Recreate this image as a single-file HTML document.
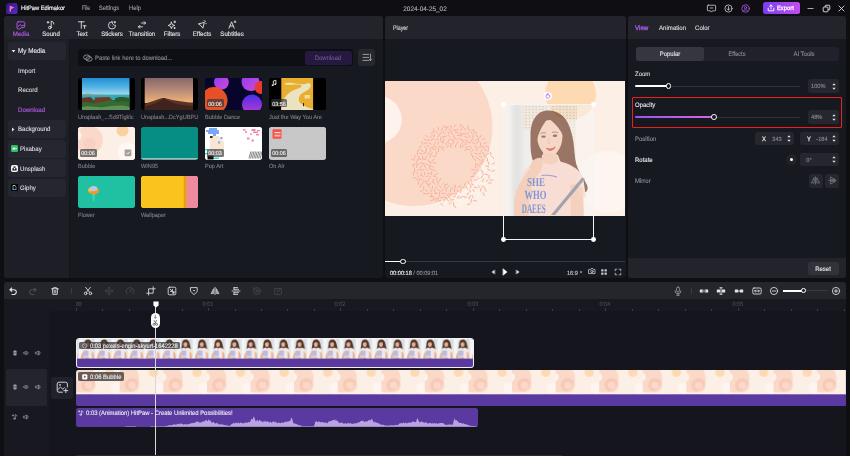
<!DOCTYPE html><html><head><meta charset="utf-8"><title>HitPaw Edimakor</title><style>
html,body{margin:0;padding:0;background:#0e0e13;}
body{width:850px;height:456px;position:relative;overflow:hidden;font-family:"Liberation Sans",sans-serif;color:#e6e6ea;font-size:6px;text-rendering:geometricPrecision;}
#w{position:absolute;left:0;top:0;width:850px;height:456px;overflow:hidden;will-change:transform}
.a{position:absolute;box-sizing:border-box}
.t{white-space:nowrap;overflow:visible;-webkit-text-stroke:.12px currentColor}
svg{overflow:visible}
text{font-family:"Liberation Sans",sans-serif;white-space:pre}
g text{font-family:inherit}
</style></head><body><div id="w">
<svg class="a" style="left:5.5px;top:2.5px;" width="11.5" height="11" viewBox="0 0 11.5 11"><defs><linearGradient id="lg1" x1="0" y1="0" x2="1" y2="1"><stop offset="0" stop-color="#2a1670"/><stop offset="1" stop-color="#5b2bd6"/></linearGradient>
<linearGradient id="lg2" x1="0" y1="0" x2="1" y2="1"><stop offset="0" stop-color="#ff5bd0"/><stop offset="1" stop-color="#ffb13b"/></linearGradient></defs>
<rect x="0" y="0" width="11.5" height="11" rx="2" fill="url(#lg1)"/>
<path d="M3.6 2.6 L8.2 4.6 L5 6.2 L5 8.6 L3.6 8.6 Z" fill="url(#lg2)"/></svg>
<svg class="a" style="left:21px;top:10.20px" width="1" height="1"><text x="0" y="0" transform="scale(0.935,1)" font-size="6.15" fill="#e8e8ee" stroke="#e8e8ee" stroke-width="0.2" text-anchor="start" >HitPaw Edimakor</text></svg>
<svg class="a" style="left:81.8px;top:10.20px" width="1" height="1"><text x="0" y="0" transform="scale(0.935,1)" font-size="6.42" fill="#9d9da6" stroke="#9d9da6" stroke-width="0.12" text-anchor="start"  textLength="8.56" lengthAdjust="spacingAndGlyphs">File</text></svg>
<svg class="a" style="left:98.7px;top:10.20px" width="1" height="1"><text x="0" y="0" transform="scale(0.935,1)" font-size="6.42" fill="#9d9da6" stroke="#9d9da6" stroke-width="0.12" text-anchor="start"  textLength="21.39" lengthAdjust="spacingAndGlyphs">Settings</text></svg>
<svg class="a" style="left:129px;top:10.20px" width="1" height="1"><text x="0" y="0" transform="scale(0.935,1)" font-size="6.42" fill="#9d9da6" stroke="#9d9da6" stroke-width="0.12" text-anchor="start"  textLength="12.83" lengthAdjust="spacingAndGlyphs">Help</text></svg>
<svg class="a" style="left:425.3px;top:10.57px" width="1" height="1"><text x="0" y="0" transform="scale(0.935,1)" font-size="6.63" fill="#b4b4bc" stroke="#b4b4bc" stroke-width="0.12" text-anchor="middle"  textLength="46.52" lengthAdjust="spacingAndGlyphs">2024-04-25_02</text></svg>
<svg class="a" style="left:707px;top:3.5px;" width="9" height="9" viewBox="0 0 9 9"><path d="M1.2 1.2 h6.6 a0.8 0.8 0 0 1 .8 .8 v4 a.8 .8 0 0 1 -.8 .8 h-2.3 l-1 1.3 l-1 -1.3 h-2.3 a.8 .8 0 0 1 -.8 -.8 v-4 a.8 .8 0 0 1 .8 -.8z M3.2 4 h2.6" fill="none" stroke="#d0d0d6" stroke-width="0.8" stroke-linecap="round" stroke-linejoin="round"/></svg>
<svg class="a" style="left:724px;top:3.5px;" width="9" height="9" viewBox="0 0 9 9"><circle cx="4.5" cy="4.5" r="3.6" fill="none" stroke="#d0d0d6" stroke-width="0.8" stroke-linecap="round" stroke-linejoin="round"/><path d="M4.5 2.6 v3.4 M3.2 4.8 l1.3 1.3 l1.3 -1.3" fill="none" stroke="#d0d0d6" stroke-width="0.8" stroke-linecap="round" stroke-linejoin="round"/></svg>
<svg class="a" style="left:740.5px;top:3.5px;" width="9" height="9" viewBox="0 0 9 9"><circle cx="4.5" cy="4.5" r="3.7" fill="none" stroke="#b45cf0" stroke-width="0.8" stroke-linecap="round" stroke-linejoin="round"/><circle cx="4.5" cy="3.7" r="1.15" fill="none" stroke="#b45cf0" stroke-width="0.8" stroke-linecap="round" stroke-linejoin="round"/><path d="M2.3 7.2 c.5 -2 3.9 -2 4.4 0" fill="none" stroke="#b45cf0" stroke-width="0.8" stroke-linecap="round" stroke-linejoin="round"/></svg>
<div class="a " style="left:763px;top:2px;width:36.5px;height:12.2px;border-radius:2.5px;background:linear-gradient(90deg,#7a3cf2,#c24df0);"></div>
<svg class="a" style="left:767.3px;top:4.2px;" width="8" height="8" viewBox="0 0 8 8"><path d="M1.2 4.2 v2.6 h5.6 v-2.6 M4 5 v-4 M2.6 2.3 l1.4 -1.4 l1.4 1.4" fill="none" stroke="#fff" stroke-width="0.9" stroke-linecap="round" stroke-linejoin="round"/></svg>
<svg class="a" style="left:777px;top:10.42px" width="1" height="1"><text x="0" y="0" transform="scale(0.935,1)" font-size="6.21" fill="#ffffff" stroke="#ffffff" stroke-width="0.25" text-anchor="start" >Export</text></svg>
<svg class="a" style="left:806px;top:3.5px;" width="9" height="9" viewBox="0 0 9 9"><path d="M1.5 4.5 h6" stroke="#cfcfd5" stroke-width="0.8" fill="none"/></svg>
<svg class="a" style="left:821.5px;top:3.5px;" width="9" height="9" viewBox="0 0 9 9"><rect x="1.2" y="3" width="4.8" height="4.8" rx="0.8" fill="none" stroke="#e0e0e6" stroke-width="0.9"/><path d="M3.2 3 v-1 a.8 .8 0 0 1 .8 -.8 h3 a.8 .8 0 0 1 .8 .8 v3 a.8 .8 0 0 1 -.8 .8 h-1" fill="none" stroke="#e0e0e6" stroke-width="0.9"/></svg>
<svg class="a" style="left:837px;top:3.5px;" width="9" height="9" viewBox="0 0 9 9"><path d="M2 2 l5 5 M7 2 l-5 5" stroke="#e0e0e6" stroke-width="0.9" fill="none" stroke-linecap="round"/></svg>
<div class="a " style="left:4px;top:16px;width:379px;height:262px;background:#171920;border-radius:3px;"></div>
<div class="a " style="left:4px;top:16px;width:379px;height:23px;background:#23242b;border-radius:3px 3px 0 0;"></div>
<div class="a " style="left:4px;top:39px;width:65.5px;height:239px;background:#1d1e26;border-radius:0 0 0 3px;border-right:.8px solid #15161b;"></div>
<svg class="a" style="left:21px;top:36.34px" width="1" height="1"><text x="0" y="0" transform="scale(0.935,1)" font-size="6.53" fill="#b65cf2" stroke="#b65cf2" stroke-width="0.12" text-anchor="middle" >Media</text></svg>
<svg class="a" style="left:51px;top:36.34px" width="1" height="1"><text x="0" y="0" transform="scale(0.935,1)" font-size="6.53" fill="#e2e2e8" stroke="#e2e2e8" stroke-width="0.12" text-anchor="middle" >Sound</text></svg>
<svg class="a" style="left:81.5px;top:36.34px" width="1" height="1"><text x="0" y="0" transform="scale(0.935,1)" font-size="6.53" fill="#e2e2e8" stroke="#e2e2e8" stroke-width="0.12" text-anchor="middle" >Text</text></svg>
<svg class="a" style="left:111.5px;top:36.34px" width="1" height="1"><text x="0" y="0" transform="scale(0.935,1)" font-size="6.53" fill="#e2e2e8" stroke="#e2e2e8" stroke-width="0.12" text-anchor="middle" >Stickers</text></svg>
<svg class="a" style="left:141.7px;top:36.34px" width="1" height="1"><text x="0" y="0" transform="scale(0.935,1)" font-size="6.53" fill="#e2e2e8" stroke="#e2e2e8" stroke-width="0.12" text-anchor="middle" >Transition</text></svg>
<svg class="a" style="left:172px;top:36.34px" width="1" height="1"><text x="0" y="0" transform="scale(0.935,1)" font-size="6.53" fill="#e2e2e8" stroke="#e2e2e8" stroke-width="0.12" text-anchor="middle" >Filters</text></svg>
<svg class="a" style="left:202px;top:36.34px" width="1" height="1"><text x="0" y="0" transform="scale(0.935,1)" font-size="6.53" fill="#e2e2e8" stroke="#e2e2e8" stroke-width="0.12" text-anchor="middle" >Effects</text></svg>
<svg class="a" style="left:232px;top:36.34px" width="1" height="1"><text x="0" y="0" transform="scale(0.935,1)" font-size="6.53" fill="#e2e2e8" stroke="#e2e2e8" stroke-width="0.12" text-anchor="middle" >Subtitles</text></svg>
<svg class="a" style="left:16px;top:19.5px;" width="10" height="10" viewBox="0 0 10 10"><path d="M2.2 1.8 h5 a1.6 1.6 0 0 1 1.6 1.6 v2.6 a1.6 1.6 0 0 1 -1.6 1.6 h-2 l-1.2 1.4 h-1.6 a1.4 1.4 0 0 1 -1.4 -1.4 v-4.2 a1.6 1.6 0 0 1 1.2 -1.6z" fill="none" stroke="#b65cf2" stroke-width="0.9" stroke-linecap="round" stroke-linejoin="round"/><path d="M2 6.6 l2.2 -2 l1.8 1.6 l1.2 -1 l1.4 1.2" fill="none" stroke="#b65cf2" stroke-width="0.9" stroke-linecap="round" stroke-linejoin="round"/></svg>
<svg class="a" style="left:46px;top:19.5px;" width="10" height="10" viewBox="0 0 10 10"><path d="M5.2 7.4 v-6.2 c1.6 .2 2.6 1.2 2.6 2.8" fill="none" stroke="#e2e2e8" stroke-width="0.9" stroke-linecap="round" stroke-linejoin="round"/><ellipse cx="3.9" cy="7.6" rx="1.4" ry="1.2" fill="none" stroke="#e2e2e8" stroke-width="0.9" stroke-linecap="round" stroke-linejoin="round"/><path d="M2 1.4 v1.8 M1.1 2.3 h1.8" fill="none" stroke="#e2e2e8" stroke-width="0.9" stroke-linecap="round" stroke-linejoin="round"/></svg>
<svg class="a" style="left:76.5px;top:19.5px;" width="10" height="10" viewBox="0 0 10 10"><path d="M1.400 1.800 h5.800 M4.300 1.800 v6.600 M6.200 5.800 h2.800 M7.600 5.800 v2.600" fill="none" stroke="#e2e2e8" stroke-width="0.9" stroke-linecap="round" stroke-linejoin="round"/></svg>
<svg class="a" style="left:106.5px;top:19.5px;" width="10" height="10" viewBox="0 0 10 10"><path d="M5 1.8 a3.6 3.6 0 1 0 3.6 3.6 c-1.6 .2 -3.6 -1.2 -3.6 -3.6z" fill="none" stroke="#e2e2e8" stroke-width="0.9" stroke-linecap="round" stroke-linejoin="round"/><circle cx="3.8" cy="5" r=".45" fill="#e2e2e8"/><circle cx="5.6" cy="6.6" r=".45" fill="#e2e2e8"/><path d="M7.8 1.4 v1.6 M7 2.2 h1.6" fill="none" stroke="#e2e2e8" stroke-width="0.9" stroke-linecap="round" stroke-linejoin="round"/></svg>
<svg class="a" style="left:136.7px;top:19.5px;" width="10" height="10" viewBox="0 0 10 10"><path d="M4.6 3 h4 M7.2 1.6 l1.4 1.4 l-1.4 1.4" fill="none" stroke="#e2e2e8" stroke-width="0.9" stroke-linecap="round" stroke-linejoin="round"/><path d="M5.4 6.8 h-4 M2.8 5.4 l-1.4 1.4 l1.4 1.4" fill="none" stroke="#e2e2e8" stroke-width="0.9" stroke-linecap="round" stroke-linejoin="round"/></svg>
<svg class="a" style="left:167px;top:19.5px;" width="10" height="10" viewBox="0 0 10 10"><path d="M4.4 2.2 l.9 2.3 l2.3 .9 l-2.3 .9 l-.9 2.3 l-.9 -2.3 l-2.3 -.9 l2.3 -.9z" fill="none" stroke="#e2e2e8" stroke-width="0.9" stroke-linecap="round" stroke-linejoin="round"/><path d="M7.8 1 v1.8 M6.9 1.9 h1.8" fill="none" stroke="#e2e2e8" stroke-width="0.9" stroke-linecap="round" stroke-linejoin="round"/><path d="M7.6 7.4 v1.2 M7 8 h1.2" fill="none" stroke="#e2e2e8" stroke-width="0.9" stroke-linecap="round" stroke-linejoin="round"/></svg>
<svg class="a" style="left:197px;top:19.5px;" width="10" height="10" viewBox="0 0 10 10"><path d="M1.8 3.8 l5.6 -1.4 l-1.6 5.8 l-1.6 -2.2z" fill="none" stroke="#e2e2e8" stroke-width="0.9" stroke-linecap="round" stroke-linejoin="round"/><path d="M8.4 1.2 l.3 .3 M8.8 3.6 h.4 M7.2 .6 v.4" fill="none" stroke="#e2e2e8" stroke-width="0.9" stroke-linecap="round" stroke-linejoin="round"/></svg>
<svg class="a" style="left:227px;top:19.5px;" width="10" height="10" viewBox="0 0 10 10"><path d="M2 8.2 l2.6 -6.4 l2.6 6.4 M3 6 h3.2" fill="none" stroke="#e2e2e8" stroke-width="0.9" stroke-linecap="round" stroke-linejoin="round"/><path d="M8 1 v1.6 M7.2 1.8 h1.6" fill="none" stroke="#e2e2e8" stroke-width="0.9" stroke-linecap="round" stroke-linejoin="round"/></svg>
<div class="a " style="left:8px;top:42px;width:58.2px;height:18px;background:#25262f;border-radius:3px;"></div>
<svg class="a" style="left:10.5px;top:49px;" width="5" height="4" viewBox="0 0 5 4"><path d="M0.6 1 h3.8 l-1.9 2.4z" fill="#e6e6ea"/></svg>
<svg class="a" style="left:18px;top:53.41px" width="1" height="1"><text x="0" y="0" transform="scale(0.935,1)" font-size="6.74" fill="#e6e6ea" stroke="#e6e6ea" stroke-width="0.12" text-anchor="start" >My Media</text></svg>
<svg class="a" style="left:18px;top:72.84px" width="1" height="1"><text x="0" y="0" transform="scale(0.935,1)" font-size="6.53" fill="#d4d4da" stroke="#d4d4da" stroke-width="0.12" text-anchor="start" >Import</text></svg>
<svg class="a" style="left:18px;top:92.14px" width="1" height="1"><text x="0" y="0" transform="scale(0.935,1)" font-size="6.53" fill="#d4d4da" stroke="#d4d4da" stroke-width="0.12" text-anchor="start" >Record</text></svg>
<svg class="a" style="left:18px;top:111.94px" width="1" height="1"><text x="0" y="0" transform="scale(0.935,1)" font-size="6.53" fill="#b65cf2" stroke="#b65cf2" stroke-width="0.12" text-anchor="start" >Download</text></svg>
<div class="a " style="left:8px;top:120px;width:58.2px;height:18px;background:#25262f;border-radius:3px;"></div>
<svg class="a" style="left:10.8px;top:126.5px;" width="4" height="5" viewBox="0 0 4 5"><path d="M1 0.6 v3.8 l2.4 -1.9z" fill="#e6e6ea"/></svg>
<svg class="a" style="left:18px;top:131.34px" width="1" height="1"><text x="0" y="0" transform="scale(0.935,1)" font-size="6.53" fill="#dedee4" stroke="#dedee4" stroke-width="0.12" text-anchor="start" >Background</text></svg>
<div class="a " style="left:8px;top:139.7px;width:58.2px;height:18px;background:#25262f;border-radius:3px;"></div>
<svg class="a" style="left:11px;top:145.3px;" width="7" height="7" viewBox="0 0 7 7"><rect x="0" y="0" width="7" height="7" rx="1.3" fill="#2fbf62"/><path d="M1.6 2.4 h2.6 v2.4 h-2.6z M4.2 3.4 l1.4 -.8 v2 l-1.4 -.8" fill="#d8ffe4"/></svg>
<svg class="a" style="left:20px;top:151.04px" width="1" height="1"><text x="0" y="0" transform="scale(0.935,1)" font-size="6.53" fill="#dedee4" stroke="#dedee4" stroke-width="0.12" text-anchor="start" >Pixabay</text></svg>
<div class="a " style="left:8px;top:159.3px;width:58.2px;height:18px;background:#25262f;border-radius:3px;"></div>
<svg class="a" style="left:11px;top:164.9px;" width="7" height="7" viewBox="0 0 7 7"><rect x="0" y="0" width="7" height="7" rx="1.8" fill="#f2f2f4"/><path d="M2.4 1.4 h2.2 v1.4 h-2.2z M1.4 3.3 h1.6 v1.3 h1 v-1.3 h1.6 v2.3 h-4.2z" fill="#18181c"/></svg>
<svg class="a" style="left:20px;top:170.64px" width="1" height="1"><text x="0" y="0" transform="scale(0.935,1)" font-size="6.53" fill="#dedee4" stroke="#dedee4" stroke-width="0.12" text-anchor="start" >Unsplash</text></svg>
<div class="a " style="left:8px;top:178.8px;width:58.2px;height:18px;background:#25262f;border-radius:3px;"></div>
<svg class="a" style="left:11px;top:184.4px;" width="7" height="7" viewBox="0 0 7 7"><rect x="0" y="0" width="7" height="7" rx="1" fill="#050507"/><path d="M2 1.5 h2.2" stroke="#ffe14d" stroke-width=".9"/><path d="M2 1.5 v4" stroke="#20e58a" stroke-width=".9"/><path d="M1.6 5.5 h3.8" stroke="#4aa8ff" stroke-width=".9"/><path d="M5 5.5 v-2.4" stroke="#a45cff" stroke-width=".9"/><path d="M4.2 1.5 l.8 1.6" stroke="#ff5c7a" stroke-width=".9"/></svg>
<svg class="a" style="left:20px;top:190.14px" width="1" height="1"><text x="0" y="0" transform="scale(0.935,1)" font-size="6.53" fill="#dedee4" stroke="#dedee4" stroke-width="0.12" text-anchor="start" >Giphy</text></svg>
<div class="a " style="left:78px;top:49px;width:274.5px;height:17px;background:#0e0f14;border-radius:3px;"></div>
<svg class="a" style="left:83.4px;top:53.6px;" width="10" height="8" viewBox="0 0 10 8"><ellipse cx="3.8" cy="3.2" rx="3.2" ry="2.3" fill="none" stroke="#9a9aa4" stroke-width=".85"/><ellipse cx="6" cy="4.9" rx="3.2" ry="2.3" fill="none" stroke="#9a9aa4" stroke-width=".85"/></svg>
<svg class="a" style="left:94.5px;top:59.86px" width="1" height="1"><text x="0" y="0" transform="scale(0.935,1)" font-size="6.31" fill="#8a8a94" stroke="#8a8a94" stroke-width="0.12" text-anchor="start" >Paste link here to download...</text></svg>
<div class="a " style="left:305px;top:50.5px;width:46.5px;height:14px;background:#26193f;border-radius:2.5px;"></div>
<svg class="a" style="left:328.2px;top:59.80px" width="1" height="1"><text x="0" y="0" transform="scale(0.935,1)" font-size="6.42" fill="#6b5a90" stroke="#6b5a90" stroke-width="0.12" text-anchor="middle" >Download</text></svg>
<div class="a " style="left:357.5px;top:49px;width:17.5px;height:17px;background:#26272f;border-radius:3px;"></div>
<svg class="a" style="left:361.5px;top:53px;" width="10" height="9" viewBox="0 0 10 9"><path d="M1 1.4 h5.6 M1 4.4 h5.6 M1 7.4 h5.6 M8.4 1 v6.6 M7.4 6.4 l1 1.2 l1 -1.2" fill="none" stroke="#b8b8c0" stroke-width=".8" stroke-linecap="round" stroke-linejoin="round"/></svg>
<svg class="a" style="left:77.8px;top:77.5px;border-radius:3px;overflow:hidden;background:#000" width="57" height="32.5" viewBox="0 0 57 32.5"><defs><linearGradient id="sky1" x1="0" y1="0" x2="0" y2="1"><stop offset="0" stop-color="#1f8fd4"/><stop offset=".55" stop-color="#56b4e4"/><stop offset="1" stop-color="#a6daf0"/></linearGradient></defs>
<rect x="4" y="0" width="47.5" height="17" fill="url(#sky1)"/>
<rect x="4" y="16.6" width="47.5" height="7" fill="#35a8b0"/>
<path d="M4 16.2 l6 -.6 l6 .8 l8 .2 v.6 h-20z" fill="#8aa090"/>
<rect x="4" y="22" width="47.5" height="10.5" fill="#2c5a2a"/>
<path d="M4 20 l8 -1 l3 2 l-2 3.4 h-9z" fill="#6a3324"/><path d="M17 19.4 l14 -.4 l3 2.4 l-3 3.6 h-15z" fill="#74382a"/>
<path d="M4 24.5 c6 -2 10 2 16 .5 s12 -4 18 -2 s8 -3 13.500 -1 v10.500 h-47.500z" fill="#356a30"/>
<path d="M4 29 c8 -2 14 1 22 0 s16 -3 25.500 0 v3.500 h-47.500z" fill="#5f8f5a"/>
<path d="M37 20.500 c3 -2 8 -2 14.500 -.5 v4 c-5 -1 -10 -1 -14.500 0z" fill="#285a2c"/></svg>
<svg class="a" style="left:77.8px;top:118.54px" width="1" height="1"><text x="0" y="0" transform="scale(0.935,1)" font-size="5.99" fill="#7c7c86" stroke="#7c7c86" stroke-width="0.12" text-anchor="start" >Unsplash_...Sd9Tigklc</text></svg>
<svg class="a" style="left:141.2px;top:77.5px;border-radius:3px;overflow:hidden;background:#000" width="57" height="32.5" viewBox="0 0 57 32.5"><defs><linearGradient id="sky2" x1="0" y1="0" x2="0" y2="1"><stop offset="0" stop-color="#86676a"/><stop offset=".5" stop-color="#b98b78"/><stop offset="1" stop-color="#f0b577"/></linearGradient></defs>
<rect x="3.700" y="0" width="48.300" height="25" fill="url(#sky2)"/>
<path d="M3.700 25.400 c5 -1 11 -3.600 16 -5 c2 -.6 3.600 -.6 5.600 0 c8 2.200 16 3.400 26.700 4.200 v7.900 h-48.300z" fill="#5a3226"/>
<path d="M22.500 20 c-3 3.500 -9 6.500 -18.800 8.500 v4 h48.300 v-4.500 c-10 -.5 -22 -2.500 -29.500 -8z" fill="#40231d"/></svg>
<svg class="a" style="left:141.2px;top:118.54px" width="1" height="1"><text x="0" y="0" transform="scale(0.935,1)" font-size="5.99" fill="#7c7c86" stroke="#7c7c86" stroke-width="0.12" text-anchor="start" >Unsplash...DcYgUBPU</text></svg>
<svg class="a" style="left:204.8px;top:77.5px;border-radius:3px;overflow:hidden;background:#07052c" width="57" height="32.5" viewBox="0 0 57 32.5"><defs>
<linearGradient id="b1" x1="0" y1="0" x2="1" y2="1"><stop offset="0" stop-color="#f24a24"/><stop offset="1" stop-color="#d9582c"/></linearGradient>
<linearGradient id="b2" x1="0" y1="0" x2="1" y2="1"><stop offset="0" stop-color="#8a3cf4"/><stop offset="1" stop-color="#d04ad8"/></linearGradient>
<linearGradient id="b3" x1="0" y1="0" x2="0" y2="1"><stop offset="0" stop-color="#4a2ee8"/><stop offset="1" stop-color="#c03cd0"/></linearGradient>
</defs>
<rect width="57" height="32.500" fill="#07052c"/>
<circle cx="16.400" cy="4.200" r="7.400" fill="url(#b2)"/>
<circle cx="9" cy="22.500" r="13.500" fill="url(#b1)"/>
<circle cx="45.500" cy="4" r="9" fill="url(#b2)"/>
<circle cx="56" cy="9.500" r="6.500" fill="#e83a2e"/>
<circle cx="47" cy="26.500" r="10" fill="url(#b3)"/></svg>
<div class="a " style="left:207.0px;top:99.4px;width:16.5px;height:8px;background:rgba(50,50,54,.66);border-radius:1.5px;"></div>
<svg class="a" style="left:215.3px;top:105.51px" width="1" height="1"><text x="0" y="0" transform="scale(0.935,1)" font-size="5.89" fill="#f0f0f2" stroke="#f0f0f2" stroke-width="0.12" text-anchor="middle" >00:06</text></svg>
<svg class="a" style="left:204.8px;top:118.54px" width="1" height="1"><text x="0" y="0" transform="scale(0.935,1)" font-size="5.99" fill="#7c7c86" stroke="#7c7c86" stroke-width="0.12" text-anchor="start" >Bubble Dance</text></svg>
<svg class="a" style="left:268.6px;top:77.5px;border-radius:3px;overflow:hidden;background:#000" width="57" height="32.5" viewBox="0 0 57 32.5"><rect width="57" height="32.500" fill="#000"/>
<rect x="12.300" y="0" width="31.800" height="32.500" fill="#e8ae2e"/>
<path d="M15 6 c6 -4 16 3 24 -1 c4 0 4 5 -2 8 c-6 3 -8 6 -7 10 c1 3 8 7 14.100 8 v1.500 h-31.800 v-6 c2 -6 6 -12 14 -15 c8 -2 8 -5 2 -5 c-6 0 -10 1 -13.300 -.5z" fill="#ebe3bf"/>
<rect x="35.500" y="17" width="5.500" height="3.500" fill="#f2e6b8" opacity=".8"/>
<rect x="34" y="25" width="1" height="3.200" fill="#222"/>
<path d="M4.300 7.200 v-4.200 l2.600 -.8 v3.800" fill="none" stroke="#fff" stroke-width=".8"/><ellipse cx="3.600" cy="7.200" rx="1" ry=".8" fill="#fff"/><ellipse cx="6.200" cy="6.200" rx="1" ry=".8" fill="#fff"/></svg>
<div class="a " style="left:270.8px;top:99.4px;width:16.5px;height:8px;background:rgba(50,50,54,.66);border-radius:1.5px;"></div>
<svg class="a" style="left:279.1px;top:105.51px" width="1" height="1"><text x="0" y="0" transform="scale(0.935,1)" font-size="5.89" fill="#f0f0f2" stroke="#f0f0f2" stroke-width="0.12" text-anchor="middle" >03:56</text></svg>
<svg class="a" style="left:268.6px;top:118.54px" width="1" height="1"><text x="0" y="0" transform="scale(0.935,1)" font-size="5.99" fill="#7c7c86" stroke="#7c7c86" stroke-width="0.12" text-anchor="start" >Just the Way You Are</text></svg>
<svg class="a" style="left:77.8px;top:127px;border-radius:3px;overflow:hidden;background:#fcefe6" width="57" height="32.5" viewBox="0 0 57 32.5"><rect width="57" height="32.500" fill="#fcefe6"/>
<circle cx="11" cy="13" r="14" fill="#fad9cb"/>
<circle cx="11.500" cy="17" r="6.500" fill="#f8cdbd" opacity=".7"/>
<circle cx="-1" cy="8.500" r="4.500" fill="#fff3ee"/>
<circle cx="44.500" cy="3.500" r="6" fill="#fbd0a0"/>
<circle cx="49" cy="25" r="9.500" fill="#fff7f3"/><rect x="46.600" y="22.400" width="6.800" height="6.800" rx="1.200" fill="#a59d98"/><path d="M48.300 25.800 l1.300 1.300 l2.400 -2.600" fill="none" stroke="#fff" stroke-width=".9"/></svg>
<div class="a " style="left:80.0px;top:148.9px;width:16.5px;height:8px;background:rgba(50,50,54,.66);border-radius:1.5px;"></div>
<svg class="a" style="left:88.3px;top:155.01px" width="1" height="1"><text x="0" y="0" transform="scale(0.935,1)" font-size="5.89" fill="#f0f0f2" stroke="#f0f0f2" stroke-width="0.12" text-anchor="middle" >00:06</text></svg>
<svg class="a" style="left:77.8px;top:168.04px" width="1" height="1"><text x="0" y="0" transform="scale(0.935,1)" font-size="5.99" fill="#7c7c86" stroke="#7c7c86" stroke-width="0.12" text-anchor="start" >Bubble</text></svg>
<svg class="a" style="left:141.2px;top:127px;border-radius:3px;overflow:hidden;background:#068d84" width="57" height="32.5" viewBox="0 0 57 32.5"><rect width="57" height="32.500" fill="#068d84"/><rect y="31.200" width="57" height="1.300" fill="#c6c9c8"/></svg>
<svg class="a" style="left:141.2px;top:168.04px" width="1" height="1"><text x="0" y="0" transform="scale(0.935,1)" font-size="5.99" fill="#7c7c86" stroke="#7c7c86" stroke-width="0.12" text-anchor="start" >WIN95</text></svg>
<svg class="a" style="left:204.8px;top:127px;border-radius:3px;overflow:hidden;background:#fff" width="57" height="32.5" viewBox="0 0 57 32.5"><rect width="57" height="32.500" fill="#ffffff"/><path d="M1 3 h3 v-2 h8 v2 h2 v4 h-3 v3 h-3 v-3 h-5 v-2 h-2z" fill="#7aa6f2"/><path d="M5 9 h9 l5 6 v8 l-3 4 h-11z" fill="#f7e6d4"/><rect x="5" y="9" width="2.600" height="2" fill="#3a2a22"/><rect x="15.500" y="10" width="2" height="2" fill="#7aa6f2"/><rect x="13" y="14.500" width="2" height="2" fill="#7aa6f2"/><rect x="0" y="22" width="3" height="1.400" fill="#28e0b0"/><rect x="0" y="26" width="4" height="1.400" fill="#28e0b0"/><rect x="8" y="30.500" width="6" height="1.400" fill="#28e0b0"/><rect x="2.500" y="28.500" width="6" height="4" fill="#0a0a0a"/><rect x="38" y="2" width="2.5" height="1.6" fill="#f583a8"/><rect x="40" y="4.2" width="2" height="1.6" fill="#f583a8"/><rect x="46.5" y="2" width="4" height="2" fill="#f583a8"/><rect x="48" y="4.5" width="5" height="1.6" fill="#f583a8"/><rect x="51" y="7" width="3" height="1.4" fill="#f583a8"/><rect x="42" y="10.5" width="2.4" height="2" fill="#f583a8"/><rect x="46.5" y="12.5" width="2.4" height="2" fill="#f583a8"/><rect x="52" y="3" width="3" height="1.2" fill="#f583a8"/><rect x="45" y="6.5" width="2" height="1.4" fill="#f583a8"/><path d="M44.0 31.500 l1.800 -7" stroke="#333" stroke-width=".6"/><path d="M45.6 31.500 l1.800 -7" stroke="#333" stroke-width=".6"/><path d="M47.2 31.500 l1.800 -7" stroke="#333" stroke-width=".6"/><path d="M48.8 31.500 l1.800 -7" stroke="#333" stroke-width=".6"/><path d="M50.4 31.500 l1.800 -7" stroke="#333" stroke-width=".6"/><path d="M52.0 31.500 l1.800 -7" stroke="#333" stroke-width=".6"/><path d="M53.6 31.500 l1.800 -7" stroke="#333" stroke-width=".6"/><path d="M55.2 31.500 l1.800 -7" stroke="#333" stroke-width=".6"/></svg>
<div class="a " style="left:207.0px;top:148.9px;width:16.5px;height:8px;background:rgba(50,50,54,.66);border-radius:1.5px;"></div>
<svg class="a" style="left:215.3px;top:155.01px" width="1" height="1"><text x="0" y="0" transform="scale(0.935,1)" font-size="5.89" fill="#f0f0f2" stroke="#f0f0f2" stroke-width="0.12" text-anchor="middle" >00:03</text></svg>
<svg class="a" style="left:204.8px;top:168.04px" width="1" height="1"><text x="0" y="0" transform="scale(0.935,1)" font-size="5.99" fill="#7c7c86" stroke="#7c7c86" stroke-width="0.12" text-anchor="start" >Pop Art</text></svg>
<svg class="a" style="left:268.6px;top:127px;border-radius:3px;overflow:hidden;background:#bfbfbf" width="57" height="32.5" viewBox="0 0 57 32.5"><defs><pattern id="chk" width="2" height="2" patternUnits="userSpaceOnUse"><rect width="2" height="2" fill="#c4c4c4"/><rect width="1" height="1" fill="#cbcbcb"/><rect x="1" y="1" width="1" height="1" fill="#cbcbcb"/></pattern></defs>
<rect width="57" height="32.500" fill="url(#chk)"/>
<rect x="3.500" y="2.300" width="9" height="9.500" rx="1" fill="#f4524a"/><rect x="5.500" y="5" width="6" height="1.200" fill="#ffd9d4"/><rect x="5.500" y="7.600" width="6" height="2" fill="#ffb0a8"/></svg>
<div class="a " style="left:270.8px;top:148.9px;width:16.5px;height:8px;background:rgba(50,50,54,.66);border-radius:1.5px;"></div>
<svg class="a" style="left:279.1px;top:155.01px" width="1" height="1"><text x="0" y="0" transform="scale(0.935,1)" font-size="5.89" fill="#f0f0f2" stroke="#f0f0f2" stroke-width="0.12" text-anchor="middle" >00:06</text></svg>
<svg class="a" style="left:268.6px;top:168.04px" width="1" height="1"><text x="0" y="0" transform="scale(0.935,1)" font-size="5.99" fill="#7c7c86" stroke="#7c7c86" stroke-width="0.12" text-anchor="start" >On Air</text></svg>
<svg class="a" style="left:77.8px;top:175.5px;border-radius:3px;overflow:hidden;background:#20c0a3" width="57" height="32.5" viewBox="0 0 57 32.5"><rect width="57" height="32.500" fill="#20c0a3"/>
<path d="M13.800 16 l3.600 0 l-1 9.500 h-1.600z" fill="#3fd0b4"/>
<ellipse cx="15.500" cy="14.800" rx="5.600" ry="3.600" fill="#f29a1e"/><ellipse cx="12" cy="13.800" rx="1.800" ry="2" fill="#f6c53a"/>
<ellipse cx="15.600" cy="12.600" rx="3.800" ry="2.600" fill="#b9c7ee"/></svg>
<svg class="a" style="left:77.8px;top:216.54px" width="1" height="1"><text x="0" y="0" transform="scale(0.935,1)" font-size="5.99" fill="#7c7c86" stroke="#7c7c86" stroke-width="0.12" text-anchor="start" >Flower</text></svg>
<svg class="a" style="left:141.2px;top:175.5px;border-radius:3px;overflow:hidden;background:#f8c41d" width="57" height="32.5" viewBox="0 0 57 32.5"><rect width="57" height="32.500" fill="#f8c41d"/><rect x="42.800" y="0" width="2.800" height="32.500" fill="#ec9d12"/><rect x="45.600" y="0" width="11.400" height="32.500" fill="#ee8a9d"/></svg>
<svg class="a" style="left:141.2px;top:216.54px" width="1" height="1"><text x="0" y="0" transform="scale(0.935,1)" font-size="5.99" fill="#7c7c86" stroke="#7c7c86" stroke-width="0.12" text-anchor="start" >Wallpaper</text></svg>
<div class="a " style="left:385px;top:16px;width:241px;height:262px;background:#171920;border-radius:3px;"></div>
<div class="a " style="left:385px;top:16px;width:241px;height:23px;background:#23242b;border-radius:3px 3px 0 0;"></div>
<svg class="a" style="left:392.6px;top:29.87px" width="1" height="1"><text x="0" y="0" transform="scale(0.935,1)" font-size="6.63" fill="#d8d8de" stroke="#d8d8de" stroke-width="0.12" text-anchor="start"  textLength="16.04" lengthAdjust="spacingAndGlyphs">Player</text></svg>
<svg class="a" style="left:385.2px;top:80.8px;overflow:hidden" width="240.2" height="135.4" viewBox="0 0 240.2 135.4"><rect width="240.2" height="135.4" fill="#fcefe5"/><circle cx="28.8" cy="46.2" r="78.7" fill="#fbd9c9"/><circle cx="-7" cy="38.600" r="23.700" fill="#fef2ed"/><circle cx="185.600" cy="13" r="25.400" fill="#fddab2"/><circle cx="223" cy="101" r="31" fill="#fff5f0"/><defs><filter id="dbl"><feGaussianBlur stdDeviation=".3"/></filter></defs><path d="M58.7 44.3L60.6 46.5M63.6 45.9L60.7 46.0M65.7 44.4L66.5 47.2M71.2 43.9L69.0 45.9M75.8 43.1L74.8 45.8M77.0 44.4L78.5 46.9M83.2 44.7L83.1 47.6M49.0 48.1L48.8 51.0M52.9 46.4L53.7 49.2M57.8 46.4L56.7 49.1M61.8 46.5L60.7 49.2M64.2 47.7L65.5 50.3M67.7 49.0L70.6 49.2M73.3 48.8L70.5 49.1M76.6 47.2L75.7 50.0M79.4 47.2L81.0 49.6M83.3 47.7L85.0 50.0M86.6 49.0L89.5 49.3M48.6 50.6L46.2 52.3M50.9 50.3L52.8 52.6M56.9 51.5L54.5 53.1M57.9 50.2L59.7 52.5M62.8 50.3L64.2 52.9M66.3 50.5L67.1 53.3M70.1 51.4L73.0 51.4M76.9 52.7L74.0 52.8M79.8 52.5L77.0 53.2M83.2 51.8L80.7 53.2M85.8 50.9L87.5 53.2M88.5 51.2L91.4 51.8M40.7 54.1L42.7 56.2M47.2 54.5L44.9 56.3M49.2 53.4L48.9 56.3M54.9 53.9L52.6 55.7M59.1 55.2L56.6 56.7M61.4 55.0L58.8 56.2M63.1 53.9L65.1 56.1M68.7 53.8L69.0 56.7M71.8 54.3L74.6 54.8M74.5 54.4L77.3 55.0M80.0 55.7L82.8 56.4M83.6 53.9L85.2 56.3M88.4 54.3L87.6 57.1M91.2 53.6L92.7 56.1M96.3 54.4L94.5 56.6M38.9 57.7L40.9 59.7M42.1 58.8L44.9 59.5M48.6 58.1L45.9 59.2M53.4 58.1L50.7 59.0M55.5 56.9L55.8 59.8M59.1 58.1L57.7 60.6M64.4 58.1L62.9 60.6M65.9 58.4L68.6 59.4M69.6 57.3L72.2 58.5M73.8 57.6L76.5 58.4M76.6 58.7L79.1 60.2M80.2 58.9L82.9 59.9M88.2 58.4L85.7 59.8M92.2 58.1L89.9 59.8M93.4 57.8L93.3 60.7M99.5 57.1L97.4 59.1M37.0 60.5L37.8 63.3M42.2 62.0L39.3 62.3M44.0 61.9L46.5 63.3M50.4 61.4L48.9 63.9M53.9 60.8L52.6 63.4M56.4 61.1L59.2 62.0M61.5 61.5L61.4 64.4M63.6 61.8L66.0 63.4M68.8 60.2L68.0 63.0M73.2 60.5L71.5 62.9M78.3 60.6L76.5 63.0M80.7 61.4L80.0 64.2M82.5 61.6L85.4 61.8M87.0 61.2L89.5 62.7M93.0 60.9L90.8 62.8M95.4 61.6L95.6 64.5M101.4 61.4L98.9 62.8M35.9 64.7L34.4 67.2M39.3 65.2L41.4 67.2M41.7 64.3L44.1 65.9M49.1 65.7L46.3 66.6M50.0 65.0L51.6 67.4M53.6 65.6L56.4 66.3M57.4 65.0L59.2 67.3M63.5 64.5L61.9 66.9M65.7 63.8L66.3 66.7M71.1 63.6L70.3 66.4M75.7 63.9L75.3 66.8M78.6 63.9L77.1 66.4M83.1 65.8L80.4 66.6M85.1 65.0L86.2 67.7M89.9 64.8L91.6 67.2M95.7 65.0L93.3 66.6M99.1 65.8L96.2 66.2M100.9 65.1L103.6 66.1M33.8 68.3L32.4 70.9M35.6 69.1L38.2 70.3M41.6 67.9L40.8 70.7M45.3 67.7L45.7 70.6M47.5 68.0L50.4 68.6M53.8 67.9L53.4 70.8M56.6 67.6L58.5 69.7M82.3 68.0L79.7 69.3M82.3 68.1L85.1 69.0M88.6 68.3L86.7 70.5M91.3 67.0L92.0 69.8M97.6 68.5L95.5 70.5M99.7 66.9L100.6 69.7M103.7 67.6L103.0 70.4M32.8 70.7L32.3 73.5M37.2 72.4L34.4 72.6M41.2 71.3L38.6 72.6M44.4 71.4L42.5 73.6M47.2 71.5L45.7 74.0M51.1 70.9L51.4 73.8M85.7 71.8L87.2 74.3M89.6 72.1L92.2 73.2M96.2 72.1L93.4 72.8M97.8 71.4L99.1 74.0M103.8 72.5L101.2 73.7M105.7 71.3L105.8 74.2M30.0 74.6L29.6 77.5M32.7 74.8L34.4 77.1M37.1 74.8L38.0 77.5M41.8 75.3L40.0 77.5M45.3 74.0L45.0 76.9M48.0 75.2L50.9 75.2M87.0 74.1L88.0 76.9M90.2 75.6L92.5 77.4M94.1 74.9L96.6 76.3M98.9 74.8L101.6 75.9M106.9 75.3L108.6 77.6M26.7 78.4L29.5 79.2M32.5 78.5L31.7 81.3M33.4 77.8L36.1 78.6M37.5 78.0L40.4 78.5M42.6 78.9L44.9 80.6M49.4 78.2L47.0 79.8M88.9 77.9L91.1 79.9M93.7 77.9L95.6 80.1M97.9 78.1L97.0 80.8M102.3 77.4L102.4 80.3M31.4 82.5L28.7 83.7M34.6 82.1L32.6 84.2M35.9 81.9L38.7 82.5M39.9 82.8L42.7 83.7M44.1 81.4L46.9 82.1M48.1 81.7L51.0 82.2M90.3 82.8L93.1 83.5M97.3 81.2L94.8 82.7M103.4 81.2L103.9 84.0M109.6 81.8L107.2 83.4M27.6 83.8L28.9 86.3M32.0 83.6L31.5 86.5M36.7 84.4L35.4 87.0M39.1 84.0L40.4 86.6M44.0 84.1L44.7 86.9M45.3 84.6L47.9 86.0M90.7 84.0L90.6 86.9M95.4 83.9L93.4 86.0M101.0 85.0L103.8 85.9M29.6 87.7L29.3 90.6M35.1 88.3L32.5 89.6M38.6 88.6L35.9 89.6M41.0 87.8L43.1 89.8M44.6 87.7L47.3 88.9M48.1 88.5L50.6 90.0M86.7 88.6L89.6 89.0M92.8 88.2L91.3 90.6M95.8 88.7L97.9 90.8M102.7 88.1L105.2 89.5M109.4 89.5L106.7 90.3M28.0 91.3L28.8 94.1M30.6 91.2L33.0 92.8M36.2 92.0L35.8 94.9M39.2 90.9L39.6 93.7M45.4 92.3L42.6 92.7M46.8 90.8L46.6 93.7M52.3 92.4L49.8 93.9M90.9 91.6L88.4 93.1M96.8 91.2L98.6 93.5M100.1 93.1L102.9 93.8M28.0 96.5L30.8 97.1M32.3 94.8L34.2 97.0M36.6 94.1L38.8 96.1M43.7 94.9L40.9 95.7M45.6 95.6L44.1 98.1M48.1 95.0L51.0 95.5M89.0 95.1L86.1 95.7M92.1 95.8L94.1 97.8M97.8 94.7L96.0 97.1M104.2 94.4L103.9 97.3M31.4 97.6L33.3 99.8M36.6 98.4L33.7 98.6M38.0 99.5L40.7 100.5M43.7 99.1L41.4 100.9M48.3 98.2L48.1 101.1M51.9 97.1L51.5 100.0M55.5 97.3L54.6 100.1M85.7 98.5L87.0 101.0M92.0 98.8L89.1 99.1M98.6 97.9L97.6 100.6M102.9 99.0L100.7 100.9M107.9 99.0L105.0 99.2M33.5 100.9L33.4 103.8M38.1 101.2L36.8 103.8M40.9 102.2L43.5 103.5M45.4 101.1L44.4 103.8M47.9 100.7L49.4 103.2M53.0 100.4L52.6 103.3M58.8 101.7L56.9 103.8M63.0 102.9L60.2 103.7M80.4 101.9L79.5 104.7M83.0 100.5L84.3 103.1M86.2 102.5L88.6 104.1M103.3 101.9L106.2 102.0M36.1 104.0L34.8 106.6M38.8 105.4L38.6 108.3M42.5 104.4L44.7 106.3M47.5 105.3L47.1 108.2M51.6 105.7L50.2 108.2M54.3 104.4L56.1 106.7M59.9 104.0L59.6 106.9M64.2 104.8L62.1 106.8M68.6 105.7L66.6 107.8M69.9 103.9L70.5 106.7M75.6 104.9L73.0 106.1M79.5 106.4L76.6 106.9M81.3 105.4L82.2 108.2M85.8 103.8L85.8 106.7M89.5 106.4L92.3 106.9M92.9 104.5L95.0 106.5M97.0 105.3L99.8 106.3M38.1 109.3L35.5 110.6M40.5 108.5L42.4 110.7M45.0 108.9L47.2 110.7M49.2 109.0L50.5 111.6M52.9 108.6L55.3 110.2M58.5 108.1L56.5 110.2M61.3 107.3L61.0 110.2M65.7 108.0L65.4 110.8M69.4 107.9L69.5 110.8M71.7 109.2L74.0 110.9M76.1 108.5L75.6 111.3M84.1 108.7L85.9 111.0M88.0 108.6L89.3 111.2M96.1 107.3L95.6 110.2M99.9 107.5L100.9 110.2M38.2 112.3L41.0 112.9M44.5 112.2L41.6 112.8M46.6 112.2L46.8 115.1M52.6 112.2L49.7 112.6M54.6 111.5L54.5 114.4M60.0 112.3L57.1 112.4M64.9 112.8L62.1 113.7M67.2 112.2L65.1 114.2M71.7 112.6L68.8 112.9M83.7 111.6L82.1 114.0M98.1 111.9L99.2 114.6M44.6 115.5L47.5 115.6M48.1 115.4L49.0 118.1M53.6 115.7L52.6 118.5M55.2 116.6L58.1 116.6M59.4 115.8L61.9 117.3M63.3 115.0L64.8 117.5M70.8 114.6L68.5 116.3M74.0 114.8L72.5 117.4M77.3 115.3L74.9 117.0M78.6 115.6L81.4 116.5M85.0 114.9L84.1 117.7M86.7 114.1L88.1 116.6M48.7 118.8L45.9 119.5M51.0 117.3L51.2 120.1M55.6 119.4L52.9 120.5M60.5 117.5L59.0 120.0M62.1 118.0L63.7 120.4M68.5 118.7L65.6 119.0M86.5 118.5L85.9 121.4M88.7 119.6L91.6 119.9M55.9 122.3L57.8 124.5M66.4 121.3L64.2 123.2M68.3 121.5L68.9 124.4M85.1 122.9L82.3 123.4M68.8 125.0L71.1 126.8" stroke="#f7ae98" stroke-width=".95" stroke-linecap="round" fill="none" filter="url(#dbl)"/><path d="M102.2 75.0L104.0 77.2M106.1 76.8L106.4 79.6M101.3 81.7L99.1 83.7M97.0 84.4L98.3 87.0M104.4 84.4L107.0 85.7M111.6 86.6L108.7 86.8M100.5 88.3L100.4 91.2M95.3 91.9L92.4 92.4M105.4 90.4L105.2 93.2M100.2 94.6L98.1 96.7M106.7 95.7L109.0 97.4M95.4 98.8L92.8 99.9M91.7 101.3L92.3 104.1M95.0 102.1L97.8 103.0M100.1 100.5L100.6 103.4M100.8 105.2L102.9 107.2M81.4 108.7L81.0 111.6M93.2 107.8L91.5 110.2M73.1 112.6L75.6 114.0M77.6 111.5L78.7 114.2M87.1 111.0L86.7 113.8M88.8 111.3L91.3 112.7M93.7 111.8L93.6 114.7M93.4 114.8L91.3 116.8M70.2 118.6L73.0 119.4M74.7 118.6L74.7 121.5M77.9 118.4L77.7 121.3M82.3 117.6L80.8 120.0M54.0 121.1L52.1 123.2M61.0 121.0L60.0 123.8M73.4 122.1L71.6 124.4M77.2 122.8L74.9 124.5M82.5 121.4L80.3 123.2" stroke="#fffaf7" stroke-width=".95" stroke-linecap="round" fill="none" filter="url(#dbl)"/></svg>
<div class="a" style="left:503.5px;top:104.6px;width:90px;height:111.6px;overflow:hidden;opacity:.56"><svg width="90" height="135" viewBox="0 0 90 135" style="position:absolute;left:0;top:0"><defs><filter id="bl" x="-5%" y="-5%" width="110%" height="110%"><feGaussianBlur stdDeviation="0.55"/></filter>
<filter id="bl2"><feGaussianBlur stdDeviation="2"/></filter><filter id="bl3"><feGaussianBlur stdDeviation="0.45"/></filter>
<pattern id="lat" width="3.4" height="3" patternUnits="userSpaceOnUse"><rect width="3.4" height="3" fill="#e9e6de"/><circle cx="1.7" cy="1.5" r=".85" fill="#c4b59c"/></pattern></defs>
<rect width="90" height="135" fill="#e6ebed"/>
<g filter="url(#bl2)"><rect x="-3" y="-3" width="11" height="141" fill="#f3f4f3"/><rect x="8" y="-3" width="10" height="141" fill="#cfdadf"/><rect x="18" y="24" width="12" height="70" fill="#e6ecee"/><rect x="66" y="-3" width="27" height="141" fill="#f6f5f2"/><rect x="56" y="30" width="10" height="70" fill="#ecedec"/></g>
<g filter="url(#bl3)"><rect x="19" y="1" width="24" height="24" fill="url(#lat)"/><rect x="47" y="1" width="26" height="15" fill="url(#lat)"/><rect x="58" y="16" width="14" height="40" fill="url(#lat)" opacity=".55"/></g>
<g filter="url(#bl)">
<path d="M44 5.500 C33 5.500 26.500 16 26.500 30 C26.500 40 26 50 30 58 C33 61 38 57 38 50 L54 50 C56 58 60 62 64 66 C68 72 72 80 78 87 C82 89 85 85 83 80 C79 72 74 66 72 58 C70 48 70.500 38 67.500 28 C64 13 56 5.500 44 5.500 Z" fill="#4e1600"/>
<path d="M33 30 c0 -10 6 -15 13 -15 c8 0 12.500 6 12.500 15 c0 9 -3 15 -7 19 c-3 3 -8 3 -11 0 c-4 -4 -7.500 -10 -7.500 -19z" fill="#f0c4ac"/>
<path d="M31 33 c0 -12 6 -20 13 -20 c-3 4 -6 8 -8 13 c-2 4 -3 8 -3 12z" fill="#4e1600"/>
<path d="M44 13 c8 0 15 6 16 20 c-3 -8 -8 -14 -16 -20z" fill="#4e1600"/>
<ellipse cx="39.500" cy="31.600" rx="2.300" ry="1.200" fill="#3a2018"/><ellipse cx="51" cy="30.800" rx="2.300" ry="1.200" fill="#3a2018"/>
<path d="M36.500 28.600 c1.500 -1 4 -1.200 5.500 -.4 M48 27.600 c2 -1 4.500 -.8 6 .4" stroke="#6a3a28" stroke-width=".9" fill="none"/>
<path d="M45 33 l-.8 5.500 l2.600 .4" stroke="#d9a58c" stroke-width=".9" fill="none"/>
<path d="M42.500 43 c2.500 1.800 6.500 1.200 8.500 -1.200 c-1 3.600 -6 5.200 -8.500 1.200z" fill="#c4142c" stroke="#c4142c" stroke-width="1"/>
<path d="M39 48 l14 1 l3 12 l-20 2z" fill="#ecba9f"/>
<path d="M18 72 c2 -9 10 -14 19 -17 c4 5 12 6 17 1 c10 2 21 7 25 16 l3 20 l-9 2 l-2 30 h-52 l2 -32z" fill="#f5cfc8"/>
<path d="M26 62 c1 -6 6 -10 11 -9 c3 3 2 10 -2 15 c-4 4 -10 2 -9 -6z" fill="#ebb79b"/>
<path d="M10 100 c0 -12 6 -26 16 -36 l8 5 c-6 9 -9 20 -9 30 l-1 20 h-14z" fill="#ebb79b"/>
<path d="M66 80 c6 -2 11 0 13 4 l1 30 h-13z" fill="#ecba9f"/>
<path d="M78 72.500 l3 1.600 l-30 36 h-4z" fill="#5d6680"/>
<path d="M37.600 70.400 c5 -.6 10 0 15.400 1.600" stroke="#2a55b8" stroke-width=".9" fill="none"/>
</g>
<g style="font-family:'Liberation Serif',serif" fill="#1f4fc0" font-weight="bold" filter="url(#bl3)"><text x="23" y="81" font-size="12" textLength="18" lengthAdjust="spacingAndGlyphs">SHE</text><text x="20.500" y="93.500" font-size="12.500" textLength="22" lengthAdjust="spacingAndGlyphs">WHO</text><text x="17.700" y="108" font-size="13" textLength="24" lengthAdjust="spacingAndGlyphs">DAEES</text></g>
</svg></div>
<div class="a " style="left:503.0px;top:104.1px;width:91px;height:136px;border:1px solid #f4f4f6;"></div>
<div class="a " style="left:501.1px;top:102.19999999999999px;width:4.8px;height:4.8px;border-radius:50%;background:#fff;"></div>
<div class="a " style="left:591.1px;top:102.19999999999999px;width:4.8px;height:4.8px;border-radius:50%;background:#fff;"></div>
<div class="a " style="left:501.1px;top:237.2px;width:4.8px;height:4.8px;border-radius:50%;background:#fff;"></div>
<div class="a " style="left:591.1px;top:237.2px;width:4.8px;height:4.8px;border-radius:50%;background:#fff;"></div>
<div class="a " style="left:544.3px;top:91.8px;width:8px;height:8px;border-radius:50%;background:#fff;"></div>
<svg class="a" style="left:545.3px;top:92.8px;" width="6" height="6" viewBox="0 0 6 6"><path d="M4.600 2.200 a2 2 0 1 1 -1.600 -1 M3 0.300 v2" fill="none" stroke="#b45cf0" stroke-width=".8" stroke-linecap="round"/></svg>
<div class="a " style="left:385.4px;top:260.6px;width:240px;height:1.5px;background:#383842;"></div>
<div class="a " style="left:385.4px;top:260.6px;width:18px;height:1.6px;background:#fff;"></div>
<div class="a " style="left:400.4px;top:258.7px;width:5.2px;height:5.2px;border-radius:50%;border:1.1px solid #fff;background:#171920;"></div>
<svg class="a" style="left:390px;top:275.04px" width="1" height="1"><text x="0" y="0" transform="scale(0.935,1)" font-size="5.99" fill="#8e8e98" stroke="#8e8e98" stroke-width="0.12" text-anchor="start" ><tspan fill="#ececf0" stroke="#ececf0">00:00:18</tspan> / 00:09:01</text></svg>
<svg class="a" style="left:488.5px;top:267.5px;" width="8" height="8" viewBox="0 0 8 8"><path d="M5.500 1.800 v4.400 l-3 -2.200z" fill="#d8d8de"/><path d="M5.900 1.800 v4.400" stroke="#d8d8de" stroke-width=".5"/></svg>
<svg class="a" style="left:501px;top:266.5px;" width="8" height="10" viewBox="0 0 8 10"><path d="M2.200 1.600 v6.800 l4.200 -3.400z" fill="#fff"/><path d="M2 1.600 v6.800" stroke="#fff" stroke-width=".6"/></svg>
<svg class="a" style="left:514px;top:267.5px;" width="8" height="8" viewBox="0 0 8 8"><path d="M2.500 1.800 v4.400 l3 -2.200z" fill="#d8d8de"/><path d="M2.100 1.800 v4.400" stroke="#d8d8de" stroke-width=".5"/></svg>
<svg class="a" style="left:566.6px;top:274.84px" width="1" height="1"><text x="0" y="0" transform="scale(0.935,1)" font-size="5.99" fill="#c8c8d0" stroke="#c8c8d0" stroke-width="0.12" text-anchor="start" >16:9</text></svg>
<svg class="a" style="left:579px;top:270.6px;" width="4" height="3" viewBox="0 0 4 3"><path d="M.6 .6 h2.800 l-1.400 1.700z" fill="#c8c8d0"/></svg>
<svg class="a" style="left:587.5px;top:267.3px;" width="8" height="8" viewBox="0 0 8 8"><path d="M1 2.600 h1.400 l.6 -1 h2 l.6 1 h1.400 v4 h-6z" fill="none" stroke="#c8c8d0" stroke-width=".8" stroke-linejoin="round" stroke-linecap="round"/><circle cx="4" cy="4.500" r="1.200" fill="none" stroke="#c8c8d0" stroke-width=".8" stroke-linejoin="round" stroke-linecap="round"/></svg>
<svg class="a" style="left:600.3px;top:267.5px;" width="8" height="8" viewBox="0 0 8 8"><rect x="1.200" y="1.200" width="2.300" height="2.300" rx=".5" fill="#c8c8d0"/><rect x="4.500" y="1.200" width="2.300" height="2.300" rx=".5" fill="#c8c8d0"/><rect x="1.200" y="4.500" width="2.300" height="2.300" rx=".5" fill="#c8c8d0"/><rect x="4.500" y="4.500" width="2.300" height="2.300" rx=".5" fill="#c8c8d0"/></svg>
<svg class="a" style="left:613.6px;top:267.5px;" width="8" height="8" viewBox="0 0 8 8"><path d="M1.200 2.800 v-1.600 h1.600 M5.200 1.200 h1.600 v1.600 M6.800 5.200 v1.600 h-1.600 M2.800 6.800 h-1.600 v-1.600" fill="none" stroke="#c8c8d0" stroke-width=".8" stroke-linejoin="round" stroke-linecap="round"/></svg>
<div class="a " style="left:628.3px;top:16px;width:218.2px;height:262px;background:#171920;border-radius:3px;"></div>
<div class="a " style="left:628.3px;top:16px;width:218.2px;height:22.7px;background:#23242b;border-radius:3px 3px 0 0;"></div>
<svg class="a" style="left:635px;top:29.97px" width="1" height="1"><text x="0" y="0" transform="scale(0.935,1)" font-size="6.63" fill="#b660f2" stroke="#b660f2" stroke-width="0.25" text-anchor="start" >View</text></svg>
<svg class="a" style="left:659px;top:29.94px" width="1" height="1"><text x="0" y="0" transform="scale(0.935,1)" font-size="6.53" fill="#dcdce2" stroke="#dcdce2" stroke-width="0.12" text-anchor="start" >Animation</text></svg>
<svg class="a" style="left:694.8px;top:29.94px" width="1" height="1"><text x="0" y="0" transform="scale(0.935,1)" font-size="6.53" fill="#dcdce2" stroke="#dcdce2" stroke-width="0.12" text-anchor="start" >Color</text></svg>
<div class="a " style="left:636px;top:47px;width:203px;height:14.4px;background:#20212a;border-radius:3px;"></div>
<div class="a " style="left:636px;top:47px;width:68.2px;height:14.4px;background:#35363f;border-radius:3px;"></div>
<svg class="a" style="left:669.6px;top:56.30px" width="1" height="1"><text x="0" y="0" transform="scale(0.935,1)" font-size="6.42" fill="#e6e6ea" stroke="#e6e6ea" stroke-width="0.12" text-anchor="middle" >Popular</text></svg>
<svg class="a" style="left:737.2px;top:56.30px" width="1" height="1"><text x="0" y="0" transform="scale(0.935,1)" font-size="6.42" fill="#8c8c96" stroke="#8c8c96" stroke-width="0.12" text-anchor="middle"  textLength="17.97" lengthAdjust="spacingAndGlyphs">Effects</text></svg>
<svg class="a" style="left:804.2px;top:56.30px" width="1" height="1"><text x="0" y="0" transform="scale(0.935,1)" font-size="6.42" fill="#8c8c96" stroke="#8c8c96" stroke-width="0.12" text-anchor="middle" >AI Tools</text></svg>
<svg class="a" style="left:635px;top:75.50px" width="1" height="1"><text x="0" y="0" transform="scale(0.935,1)" font-size="6.42" fill="#d8d8de" stroke="#d8d8de" stroke-width="0.12" text-anchor="start" >Zoom</text></svg>
<div class="a " style="left:635px;top:85.5px;width:165px;height:1.2px;background:#303038;border-radius:1px;"></div>
<div class="a " style="left:635px;top:85.3px;width:33px;height:1.6px;background:#fff;border-radius:1px;"></div>
<div class="a " style="left:665.6999999999999px;top:83.39999999999999px;width:5.4px;height:5.4px;border-radius:50%;border:1.1px solid #fff;background:#171920;"></div>
<div class="a " style="left:807.6px;top:79.4px;width:31.4px;height:13.4px;background:#25262e;border-radius:2.500px;"></div>
<svg class="a" style="left:830.5px;top:81.60000000000001px;" width="6" height="9" viewBox="0 0 6 9"><path d="M1.300 3.300 l1.700 -2 l1.700 2z M1.300 5.700 l1.700 2 l1.700 -2z" fill="#e6e6ea"/></svg>
<svg class="a" style="left:811.2px;top:88.18px" width="1" height="1"><text x="0" y="0" transform="scale(0.935,1)" font-size="6.1" fill="#8c8c96" stroke="#8c8c96" stroke-width="0.12" text-anchor="start" >100%</text></svg>
<div class="a " style="left:631.6px;top:97.4px;width:210.6px;height:31px;border:1.400px solid #ea211c;border-radius:1px;"></div>
<svg class="a" style="left:635px;top:106.50px" width="1" height="1"><text x="0" y="0" transform="scale(0.935,1)" font-size="6.42" fill="#e6e6ea" stroke="#e6e6ea" stroke-width="0.12" text-anchor="start" >Opacity</text></svg>
<div class="a " style="left:635px;top:116.6px;width:165px;height:1.2px;background:#303038;border-radius:1px;"></div>
<div class="a " style="left:635px;top:116.3px;width:79px;height:1.7px;background:linear-gradient(90deg,#9a55f0,#d765e6);border-radius:1px;"></div>
<div class="a " style="left:711.1px;top:114.19999999999999px;width:5.8px;height:5.8px;border-radius:50%;border:1.1px solid #fff;background:#171920;"></div>
<div class="a " style="left:807.6px;top:110.4px;width:31.4px;height:13.4px;background:#25262e;border-radius:2.500px;"></div>
<svg class="a" style="left:830.5px;top:112.60000000000001px;" width="6" height="9" viewBox="0 0 6 9"><path d="M1.300 3.300 l1.700 -2 l1.700 2z M1.300 5.700 l1.700 2 l1.700 -2z" fill="#e6e6ea"/></svg>
<svg class="a" style="left:811.2px;top:119.18px" width="1" height="1"><text x="0" y="0" transform="scale(0.935,1)" font-size="6.1" fill="#8c8c96" stroke="#8c8c96" stroke-width="0.12" text-anchor="start" >48%</text></svg>
<svg class="a" style="left:635px;top:140.50px" width="1" height="1"><text x="0" y="0" transform="scale(0.935,1)" font-size="6.42" fill="#8c8c96" stroke="#8c8c96" stroke-width="0.12" text-anchor="start" >Position</text></svg>
<div class="a " style="left:755px;top:131.6px;width:39px;height:13.7px;background:#25262e;border-radius:2.500px;"></div>
<svg class="a" style="left:785.5px;top:133.95px;" width="6" height="9" viewBox="0 0 6 9"><path d="M1.300 3.300 l1.700 -2 l1.700 2z M1.300 5.700 l1.700 2 l1.700 -2z" fill="#e6e6ea"/></svg>
<svg class="a" style="left:762px;top:140.82px" width="1" height="1"><text x="0" y="0" transform="scale(0.935,1)" font-size="6.21" fill="#e6e6ea" stroke="#e6e6ea" stroke-width="0.25" text-anchor="start" >X</text></svg>
<svg class="a" style="left:776.5px;top:140.68px" width="1" height="1"><text x="0" y="0" transform="scale(0.935,1)" font-size="6.1" fill="#8c8c96" stroke="#8c8c96" stroke-width="0.12" text-anchor="middle" >343</text></svg>
<div class="a " style="left:799.8px;top:131.6px;width:39.2px;height:13.7px;background:#25262e;border-radius:2.500px;"></div>
<svg class="a" style="left:830.5px;top:133.95px;" width="6" height="9" viewBox="0 0 6 9"><path d="M1.300 3.300 l1.700 -2 l1.700 2z M1.300 5.700 l1.700 2 l1.700 -2z" fill="#e6e6ea"/></svg>
<svg class="a" style="left:806.6px;top:140.82px" width="1" height="1"><text x="0" y="0" transform="scale(0.935,1)" font-size="6.21" fill="#e6e6ea" stroke="#e6e6ea" stroke-width="0.25" text-anchor="start" >Y</text></svg>
<svg class="a" style="left:821.5px;top:140.68px" width="1" height="1"><text x="0" y="0" transform="scale(0.935,1)" font-size="6.1" fill="#8c8c96" stroke="#8c8c96" stroke-width="0.12" text-anchor="middle" >-184</text></svg>
<svg class="a" style="left:635px;top:161.50px" width="1" height="1"><text x="0" y="0" transform="scale(0.935,1)" font-size="6.42" fill="#e6e6ea" stroke="#e6e6ea" stroke-width="0.12" text-anchor="start" >Rotate</text></svg>
<div class="a " style="left:786.4px;top:154.2px;width:10.8px;height:10.8px;border-radius:50%;background:#212127;"></div>
<div class="a " style="left:790.3px;top:158.1px;width:3px;height:3px;border-radius:50%;background:#fff;"></div>
<div class="a " style="left:800px;top:152.5px;width:39px;height:13.7px;background:#25262e;border-radius:2.500px;"></div>
<svg class="a" style="left:830.5px;top:154.85px;" width="6" height="9" viewBox="0 0 6 9"><path d="M1.300 3.300 l1.700 -2 l1.700 2z M1.300 5.700 l1.700 2 l1.700 -2z" fill="#e6e6ea"/></svg>
<svg class="a" style="left:809.2px;top:162.18px" width="1" height="1"><text x="0" y="0" transform="scale(0.935,1)" font-size="6.1" fill="#8c8c96" stroke="#8c8c96" stroke-width="0.12" text-anchor="middle" >0°</text></svg>
<svg class="a" style="left:635px;top:182.90px" width="1" height="1"><text x="0" y="0" transform="scale(0.935,1)" font-size="6.42" fill="#8c8c96" stroke="#8c8c96" stroke-width="0.12" text-anchor="start" >Mirror</text></svg>
<div class="a " style="left:808.8px;top:174px;width:14.2px;height:13.7px;background:#25262e;border-radius:2.500px;"></div>
<div class="a " style="left:825px;top:174px;width:14px;height:13.7px;background:#25262e;border-radius:2.500px;"></div>
<svg class="a" style="left:811.4px;top:176.4px;" width="9" height="9" viewBox="0 0 9 9"><path d="M4.500 .9 v7.200" fill="none" stroke="#8e8e98" stroke-width=".6" stroke-linejoin="round" stroke-linecap="round"/><path d="M3.200 2 v5 h-2.400z" fill="none" stroke="#8e8e98" stroke-width=".6" stroke-linejoin="round" stroke-linecap="round"/><path d="M5.800 2 v5 h2.400z" fill="none" stroke="#8e8e98" stroke-width=".6" stroke-linejoin="round" stroke-linecap="round"/></svg>
<svg class="a" style="left:827.5px;top:176.4px;" width="9" height="9" viewBox="0 0 9 9"><path d="M.9 4.500 h7.200" fill="none" stroke="#8e8e98" stroke-width=".6" stroke-linejoin="round" stroke-linecap="round"/><path d="M2.400 3.300 v-2.400 l4.600 2.400z" fill="none" stroke="#8e8e98" stroke-width=".6" stroke-linejoin="round" stroke-linecap="round"/><path d="M2.400 5.700 v2.400 l4.600 -2.400z" fill="none" stroke="#8e8e98" stroke-width=".6" stroke-linejoin="round" stroke-linecap="round"/></svg>
<div class="a " style="left:628.3px;top:257.5px;width:218.2px;height:20.5px;background:#23242b;border-radius:0 0 3px 3px;"></div>
<div class="a " style="left:807.7px;top:261.8px;width:31.3px;height:13.7px;background:#31323a;border-radius:2.500px;"></div>
<svg class="a" style="left:823.4px;top:271.10px" width="1" height="1"><text x="0" y="0" transform="scale(0.935,1)" font-size="6.42" fill="#e6e6ea" stroke="#e6e6ea" stroke-width="0.12" text-anchor="middle" >Reset</text></svg>
<div class="a " style="left:4px;top:282.2px;width:842px;height:174px;background:#15161d;border-radius:3px 3px 0 0;"></div>
<div class="a " style="left:4px;top:282.2px;width:842px;height:17px;background:#25262c;border-radius:3px 3px 0 0;"></div>
<div class="a " style="left:49.3px;top:299.2px;width:796.7px;height:12.2px;background:#181920;"></div>
<div class="a " style="left:4px;top:299.2px;width:45.3px;height:157px;background:#181920;"></div>
<svg class="a" style="left:7.699999999999999px;top:285.7px;" width="10" height="10" viewBox="0 0 10 10"><path d="M2.400 3.800 h3.600 a2.300 2.300 0 0 1 0 4.600 h-2" fill="none" stroke="#e2e2e8" stroke-width="1.05" stroke-linecap="round" stroke-linejoin="round"/><path d="M3.800 1.600 l-2.400 2.200 l2.400 2.200z" fill="#e2e2e8" stroke="#e2e2e8" stroke-width=".5" stroke-linejoin="round"/></svg>
<svg class="a" style="left:28.4px;top:285.7px;" width="10" height="10" viewBox="0 0 10 10"><path d="M7.600 3.800 h-3.600 a2.300 2.300 0 0 0 0 4.600 h2" fill="none" stroke="#4a4a54" stroke-width="1.05" stroke-linecap="round" stroke-linejoin="round"/><path d="M6.200 1.600 l2.400 2.200 l-2.400 2.200z" fill="#4a4a54" stroke="#4a4a54" stroke-width=".5" stroke-linejoin="round"/></svg>
<svg class="a" style="left:50px;top:285.7px;" width="10" height="10" viewBox="0 0 10 10"><path d="M1.600 2.800 h6.800 M3.600 2.800 v-1.200 h2.800 v1.200 M2.400 2.800 l.4 5.600 h4.400 l.4 -5.600 M4.200 4.400 v2.600 M5.800 4.400 v2.600" fill="none" stroke="#e2e2e8" stroke-width="0.85" stroke-linecap="round" stroke-linejoin="round"/></svg>
<div class="a " style="left:71px;top:287.6px;width:0.7px;height:6.4px;background:#3a3a44;"></div>
<svg class="a" style="left:82.5px;top:285.7px;" width="10" height="10" viewBox="0 0 10 10"><circle cx="2.600" cy="7.400" r="1.300" fill="none" stroke="#e2e2e8" stroke-width="0.85" stroke-linecap="round" stroke-linejoin="round"/><circle cx="7.400" cy="7.400" r="1.300" fill="none" stroke="#e2e2e8" stroke-width="0.85" stroke-linecap="round" stroke-linejoin="round"/><path d="M3.400 6.300 l4 -5 M6.600 6.300 l-4 -5" fill="none" stroke="#e2e2e8" stroke-width="0.85" stroke-linecap="round" stroke-linejoin="round"/></svg>
<svg class="a" style="left:103.6px;top:285.7px;" width="10" height="10" viewBox="0 0 10 10"><path d="M5 1.200 v7.600 M1.200 5 h7.600 M3.800 2.400 l1.200 -1.200 l1.200 1.200 M3.800 7.600 l1.200 1.200 l1.200 -1.200 M2.400 3.800 l-1.200 1.200 l1.200 1.200 M7.600 3.800 l1.200 1.200 l-1.200 1.200" fill="none" stroke="#4a4a54" stroke-width="0.7" stroke-linecap="round" stroke-linejoin="round"/></svg>
<svg class="a" style="left:125px;top:285.7px;" width="10" height="10" viewBox="0 0 10 10"><path d="M2 7.800 a3.800 3.800 0 1 1 6 0 M5 5.600 l1.600 -2.400" fill="none" stroke="#4a4a54" stroke-width="0.7" stroke-linecap="round" stroke-linejoin="round"/><circle cx="5" cy="5.800" r=".6" fill="#4a4a54"/></svg>
<svg class="a" style="left:146px;top:285.7px;" width="10" height="10" viewBox="0 0 10 10"><path d="M2.600 9 v-6.200 h6.600 M.8 7.200 h6.400 v-6.400" fill="none" stroke="#e2e2e8" stroke-width="0.85" stroke-linecap="round" stroke-linejoin="round"/></svg>
<svg class="a" style="left:167.4px;top:285.7px;" width="10" height="10" viewBox="0 0 10 10"><rect x="1.200" y="1.200" width="7.600" height="7.600" rx="1.200" fill="none" stroke="#e2e2e8" stroke-width="0.85" stroke-linecap="round" stroke-linejoin="round"/><path d="M3 3 l2.400 2.400 M5.400 3.400 v2 h-2" fill="none" stroke="#e2e2e8" stroke-width="0.85" stroke-linecap="round" stroke-linejoin="round"/><rect x="5.400" y="5.400" width="2.200" height="2.200" fill="#e2e2e8"/></svg>
<svg class="a" style="left:188.8px;top:285.7px;" width="10" height="10" viewBox="0 0 10 10"><path d="M1.800 1.600 h6.400 v4 l-3.200 3 l-3.200 -3z" fill="none" stroke="#e2e2e8" stroke-width="0.85" stroke-linecap="round" stroke-linejoin="round"/><path d="M3.800 4 h2.400 l-1.200 1.400z" fill="#e2e2e8"/></svg>
<svg class="a" style="left:209.8px;top:285.7px;" width="10" height="10" viewBox="0 0 10 10"><path d="M5 1.4 v7.2" fill="none" stroke="#e2e2e8" stroke-width="0.85" stroke-linecap="round" stroke-linejoin="round"/><path d="M3.700 2.600 v5 h-2.700z" fill="#9a9aa4" stroke="#e2e2e8" stroke-width=".6" stroke-linejoin="round"/><path d="M6.300 2.600 v5 h2.700z" fill="#9a9aa4" stroke="#e2e2e8" stroke-width=".6" stroke-linejoin="round"/></svg>
<svg class="a" style="left:231px;top:285.7px;" width="10" height="10" viewBox="0 0 10 10"><path d="M1 5 h8 M3 1.600 h3.600 M3 3.300 h4.600 M3 6.700 h4.600 M3 8.400 h3.600" fill="none" stroke="#e2e2e8" stroke-width="0.85" stroke-linecap="round" stroke-linejoin="round"/><path d="M3 1.600 v1.700 M3 6.700 v1.700" fill="none" stroke="#e2e2e8" stroke-width="0.85" stroke-linecap="round" stroke-linejoin="round"/></svg>
<svg class="a" style="left:252px;top:285.7px;" width="10" height="10" viewBox="0 0 10 10"><circle cx="5" cy="5" r="3.400" fill="none" stroke="#4a4a54" stroke-width="0.7" stroke-linecap="round" stroke-linejoin="round"/><circle cx="5" cy="5" r="1.200" fill="none" stroke="#4a4a54" stroke-width="0.7" stroke-linecap="round" stroke-linejoin="round"/><path d="M1.600 3 l-.6 -1.400" fill="none" stroke="#4a4a54" stroke-width="0.7" stroke-linecap="round" stroke-linejoin="round"/></svg>
<svg class="a" style="left:273px;top:285.7px;" width="10" height="10" viewBox="0 0 10 10"><rect x="1.600" y="2.400" width="6.800" height="6" rx=".8" fill="none" stroke="#4a4a54" stroke-width="0.7" stroke-linecap="round" stroke-linejoin="round"/><path d="M3.400 4.200 l1.600 1.600 l2.600 -3.600" fill="none" stroke="#4a4a54" stroke-width="0.7" stroke-linecap="round" stroke-linejoin="round"/></svg>
<svg class="a" style="left:672.9px;top:285.7px;" width="10" height="10" viewBox="0 0 10 10"><rect x="3.600" y="1" width="2.800" height="5" rx="1.400" fill="none" stroke="#a8a8b2" stroke-width="0.75" stroke-linecap="round" stroke-linejoin="round"/><path d="M2 4.800 a3 3 0 0 0 6 0 M5 7.800 v1.400 M3.600 9.200 h2.800" fill="none" stroke="#a8a8b2" stroke-width="0.75" stroke-linecap="round" stroke-linejoin="round"/></svg>
<div class="a " style="left:690.5px;top:287.6px;width:0.7px;height:6.4px;background:#3a3a44;"></div>
<svg class="a" style="left:698.6px;top:285.7px;" width="10" height="10" viewBox="0 0 10 10"><rect x=".8" y="3.400" width="3.600" height="3.200" rx=".6" fill="#e2e2e8"/><rect x="5.600" y="3.400" width="3.600" height="3.200" rx=".6" fill="#e2e2e8"/><path d="M3 5 h4" stroke="#25262c" stroke-width="1"/><path d="M3.400 5 h3.200" stroke="#e2e2e8" stroke-width=".6"/></svg>
<svg class="a" style="left:715.8px;top:285.7px;" width="10" height="10" viewBox="0 0 10 10"><rect x=".8" y="3.400" width="3.400" height="3.200" rx=".5" fill="#e2e2e8"/><rect x="5.800" y="3.400" width="3.400" height="3.200" rx=".5" fill="#e2e2e8"/><path d="M5 1.600 v6.800 M3.800 1.800 h2.400 M3.800 8.200 h2.400" fill="none" stroke="#e2e2e8" stroke-width="0.85" stroke-linecap="round" stroke-linejoin="round"/></svg>
<svg class="a" style="left:733.7px;top:285.7px;" width="10" height="10" viewBox="0 0 10 10"><rect x=".8" y="3.400" width="3.400" height="3.200" rx=".5" fill="#e2e2e8"/><rect x="5.800" y="3.400" width="3.400" height="3.200" rx=".5" fill="#e2e2e8"/><path d="M4.200 5 h1.600" fill="none" stroke="#e2e2e8" stroke-width="0.85" stroke-linecap="round" stroke-linejoin="round"/></svg>
<svg class="a" style="left:751.6px;top:285.7px;" width="10" height="10" viewBox="0 0 10 10"><rect x=".8" y="2" width="8.400" height="6" rx="1.200" fill="none" stroke="#e2e2e8" stroke-width="0.85" stroke-linecap="round" stroke-linejoin="round"/><path d="M2.800 5 h4.400 M3.600 4 l-1 1 l1 1 M6.400 4 l1 1 l-1 1" fill="none" stroke="#e2e2e8" stroke-width="0.85" stroke-linecap="round" stroke-linejoin="round"/></svg>
<svg class="a" style="left:769px;top:285.7px;" width="10" height="10" viewBox="0 0 10 10"><circle cx="5" cy="5" r="3.600" fill="none" stroke="#e2e2e8" stroke-width="0.85" stroke-linecap="round" stroke-linejoin="round"/><path d="M3.400 5 h3.200" fill="none" stroke="#e2e2e8" stroke-width="0.85" stroke-linecap="round" stroke-linejoin="round"/></svg>
<div class="a " style="left:783px;top:290.2px;width:44.5px;height:1.1px;background:#3a3a44;"></div>
<div class="a " style="left:783px;top:290px;width:20px;height:1.5px;background:#fff;"></div>
<div class="a " style="left:801.0px;top:288.45px;width:4.6px;height:4.6px;border-radius:50%;border:1px solid #fff;background:#25262c;"></div>
<svg class="a" style="left:831px;top:285.7px;" width="10" height="10" viewBox="0 0 10 10"><circle cx="5" cy="5" r="3.600" fill="none" stroke="#e2e2e8" stroke-width="0.85" stroke-linecap="round" stroke-linejoin="round"/><path d="M3.400 5 h3.200 M5 3.400 v3.200" fill="none" stroke="#e2e2e8" stroke-width="0.85" stroke-linecap="round" stroke-linejoin="round"/></svg>
<div class="a" style="left:75.65px;top:308.0px;width:.7px;height:3.4px;background:#3c3c46"></div><div class="a" style="left:102.13px;top:309.2px;width:.7px;height:2.2px;background:#3c3c46"></div><div class="a" style="left:128.61px;top:309.2px;width:.7px;height:2.2px;background:#3c3c46"></div><div class="a" style="left:155.09px;top:309.2px;width:.7px;height:2.2px;background:#3c3c46"></div><div class="a" style="left:181.57px;top:309.2px;width:.7px;height:2.2px;background:#3c3c46"></div><div class="a" style="left:208.05px;top:308.0px;width:.7px;height:3.4px;background:#3c3c46"></div><div class="a" style="left:234.53px;top:309.2px;width:.7px;height:2.2px;background:#3c3c46"></div><div class="a" style="left:261.01px;top:309.2px;width:.7px;height:2.2px;background:#3c3c46"></div><div class="a" style="left:287.49px;top:309.2px;width:.7px;height:2.2px;background:#3c3c46"></div><div class="a" style="left:313.97px;top:309.2px;width:.7px;height:2.2px;background:#3c3c46"></div><div class="a" style="left:340.45px;top:308.0px;width:.7px;height:3.4px;background:#3c3c46"></div><div class="a" style="left:366.93px;top:309.2px;width:.7px;height:2.2px;background:#3c3c46"></div><div class="a" style="left:393.41px;top:309.2px;width:.7px;height:2.2px;background:#3c3c46"></div><div class="a" style="left:419.89px;top:309.2px;width:.7px;height:2.2px;background:#3c3c46"></div><div class="a" style="left:446.37px;top:309.2px;width:.7px;height:2.2px;background:#3c3c46"></div><div class="a" style="left:472.85px;top:308.0px;width:.7px;height:3.4px;background:#3c3c46"></div><div class="a" style="left:499.33px;top:309.2px;width:.7px;height:2.2px;background:#3c3c46"></div><div class="a" style="left:525.81px;top:309.2px;width:.7px;height:2.2px;background:#3c3c46"></div><div class="a" style="left:552.29px;top:309.2px;width:.7px;height:2.2px;background:#3c3c46"></div><div class="a" style="left:578.77px;top:309.2px;width:.7px;height:2.2px;background:#3c3c46"></div><div class="a" style="left:605.25px;top:308.0px;width:.7px;height:3.4px;background:#3c3c46"></div><div class="a" style="left:631.73px;top:309.2px;width:.7px;height:2.2px;background:#3c3c46"></div><div class="a" style="left:658.21px;top:309.2px;width:.7px;height:2.2px;background:#3c3c46"></div><div class="a" style="left:684.69px;top:309.2px;width:.7px;height:2.2px;background:#3c3c46"></div><div class="a" style="left:711.17px;top:309.2px;width:.7px;height:2.2px;background:#3c3c46"></div><div class="a" style="left:737.65px;top:308.0px;width:.7px;height:3.4px;background:#3c3c46"></div><div class="a" style="left:764.13px;top:309.2px;width:.7px;height:2.2px;background:#3c3c46"></div><div class="a" style="left:790.61px;top:309.2px;width:.7px;height:2.2px;background:#3c3c46"></div><div class="a" style="left:817.09px;top:309.2px;width:.7px;height:2.2px;background:#3c3c46"></div><div class="a" style="left:843.57px;top:309.2px;width:.7px;height:2.2px;background:#3c3c46"></div>
<svg class="a" style="left:75.5px;top:299px;overflow:hidden" width="12" height="10"><text x="-5.2" y="7.1" font-size="5.6" fill="#484854" stroke="#484854" stroke-width=".12">0:00</text></svg>
<svg class="a" style="left:207.9px;top:306.24px" width="1" height="1"><text x="0" y="0" transform="scale(0.935,1)" font-size="5.99" fill="#484854" stroke="#484854" stroke-width="0.12" text-anchor="middle" >0:01</text></svg>
<svg class="a" style="left:340.3px;top:306.24px" width="1" height="1"><text x="0" y="0" transform="scale(0.935,1)" font-size="5.99" fill="#484854" stroke="#484854" stroke-width="0.12" text-anchor="middle" >0:02</text></svg>
<svg class="a" style="left:472.70000000000005px;top:306.24px" width="1" height="1"><text x="0" y="0" transform="scale(0.935,1)" font-size="5.99" fill="#484854" stroke="#484854" stroke-width="0.12" text-anchor="middle" >0:03</text></svg>
<svg class="a" style="left:605.1px;top:306.24px" width="1" height="1"><text x="0" y="0" transform="scale(0.935,1)" font-size="5.99" fill="#484854" stroke="#484854" stroke-width="0.12" text-anchor="middle" >0:04</text></svg>
<svg class="a" style="left:737.5px;top:306.24px" width="1" height="1"><text x="0" y="0" transform="scale(0.935,1)" font-size="5.99" fill="#484854" stroke="#484854" stroke-width="0.12" text-anchor="middle" >0:05</text></svg>
<div class="a " style="left:5.5px;top:368.8px;width:41px;height:37.2px;background:#24252c;border-radius:2px;"></div>
<svg class="a" style="left:11.7px;top:349.8px;" width="6" height="6" viewBox="0 0 6 6"><rect x="1.400" y=".6" width="3.200" height="4.800" rx=".9" fill="#a0a0aa"/><path d="M1.400 3 h3.200" stroke="#17171c" stroke-width=".6"/></svg>
<svg class="a" style="left:23.2px;top:349.8px;" width="6" height="6" viewBox="0 0 6 6"><path d="M.6 3 c1.200 -2 3.600 -2 4.800 0 c-1.200 2 -3.600 2 -4.800 0z" fill="none" stroke="#a0a0aa" stroke-width=".7" stroke-linecap="round" stroke-linejoin="round"/><circle cx="3" cy="3" r=".8" fill="#a0a0aa"/></svg>
<svg class="a" style="left:34.6px;top:349.8px;" width="6" height="6" viewBox="0 0 6 6"><path d="M.8 2.200 h1.200 l1.600 -1.200 v4 l-1.600 -1.200 h-1.200z" fill="none" stroke="#a0a0aa" stroke-width=".7" stroke-linecap="round" stroke-linejoin="round"/><path d="M4.600 1.600 a2 2 0 0 1 0 2.800" fill="none" stroke="#a0a0aa" stroke-width=".7" stroke-linecap="round" stroke-linejoin="round"/></svg>
<svg class="a" style="left:11.7px;top:384.4px;" width="6" height="6" viewBox="0 0 6 6"><rect x="1.400" y=".6" width="3.200" height="4.800" rx=".9" fill="#a0a0aa"/><path d="M1.400 3 h3.200" stroke="#17171c" stroke-width=".6"/></svg>
<svg class="a" style="left:23.2px;top:384.4px;" width="6" height="6" viewBox="0 0 6 6"><path d="M.6 3 c1.200 -2 3.600 -2 4.800 0 c-1.200 2 -3.600 2 -4.800 0z" fill="none" stroke="#a0a0aa" stroke-width=".7" stroke-linecap="round" stroke-linejoin="round"/><circle cx="3" cy="3" r=".8" fill="#a0a0aa"/></svg>
<svg class="a" style="left:34.6px;top:384.4px;" width="6" height="6" viewBox="0 0 6 6"><path d="M.8 2.200 h1.200 l1.600 -1.200 v4 l-1.600 -1.200 h-1.200z" fill="none" stroke="#a0a0aa" stroke-width=".7" stroke-linecap="round" stroke-linejoin="round"/><path d="M4.600 1.600 a2 2 0 0 1 0 2.800" fill="none" stroke="#a0a0aa" stroke-width=".7" stroke-linecap="round" stroke-linejoin="round"/></svg>
<svg class="a" style="left:11.5px;top:414.4px;" width="6" height="6" viewBox="0 0 6 6"><path d="M3.200 4.600 v-4 c.9 0 1.600 .5 1.600 1.400" fill="none" stroke="#a0a0aa" stroke-width=".7" stroke-linecap="round" stroke-linejoin="round"/><ellipse cx="2.400" cy="4.700" rx=".9" ry=".7" fill="none" stroke="#a0a0aa" stroke-width=".7" stroke-linecap="round" stroke-linejoin="round"/><path d="M1 .8 v1.200 M.4 1.400 h1.200" fill="none" stroke="#a0a0aa" stroke-width=".7" stroke-linecap="round" stroke-linejoin="round"/></svg>
<svg class="a" style="left:23px;top:414.4px;" width="6" height="6" viewBox="0 0 6 6"><path d="M.8 2.200 h1.200 l1.600 -1.200 v4 l-1.600 -1.200 h-1.200z" fill="none" stroke="#a0a0aa" stroke-width=".7" stroke-linecap="round" stroke-linejoin="round"/><path d="M4.600 1.600 a2 2 0 0 1 0 2.800" fill="none" stroke="#a0a0aa" stroke-width=".7" stroke-linecap="round" stroke-linejoin="round"/></svg>
<div class="a " style="left:51px;top:376.7px;width:22px;height:22px;background:#20212a;border-radius:3px;"></div>
<svg class="a" style="left:55.5px;top:381.2px;" width="13" height="13" viewBox="0 0 13 13"><path d="M11.400 6 v-3 a1.800 1.800 0 0 0 -1.800 -1.800 h-6.600 a1.800 1.800 0 0 0 -1.800 1.800 v6.400 a1.800 1.800 0 0 0 1.800 1.800 h3.400" fill="none" stroke="#d0d0d6" stroke-width="1" stroke-linecap="round"/><path d="M1.400 9 l3 -3 l2.400 2.200 l1.600 -1.400" fill="none" stroke="#d0d0d6" stroke-width="1" stroke-linecap="round" stroke-linejoin="round"/><circle cx="4" cy="3.800" r=".9" fill="#d0d0d6"/><path d="M9.800 7.600 v4 M7.800 9.600 h4" stroke="#d0d0d6" stroke-width="1" stroke-linecap="round"/></svg>
<svg class="a" style="left:76px;top:338.6px;border-radius:3px;overflow:hidden;background:#5a3aa0" width="398" height="29.2" viewBox="0 0 398 29.2"><defs><pattern id="fr" width="16.31" height="19.6" patternUnits="userSpaceOnUse" x="2.9"><rect width="16.31" height="19.6" fill="#e4e8ea"/>
<rect x="0" y="0" width="3.400" height="19.6" fill="#f3f4f4"/><rect x="12.800" y="0" width="2.200" height="19.6" fill="#d5dcdf"/>
<path d="M9 .4 c-2.600 0 -3.800 1.800 -3.800 4.400 c0 1.800 -.6 3.400 -.8 4.800 l2.400 .6 l5.200 -.4 l2 2.600 c.6 -1.600 -.4 -4.200 -.8 -6.400 c-.4 -3 -1.400 -5.600 -4.200 -5.600z" fill="#55382c"/>
<ellipse cx="8.600" cy="5.400" rx="1.900" ry="2.600" fill="#e3b49c"/>
<path d="M6.600 4 c.6 -1.400 2.600 -2 4 -.8 c-1.400 -.2 -3 .2 -4 .8z" fill="#55382c"/>
<path d="M2.800 12.400 c.4 -2.200 2.400 -3.400 4.400 -3.800 c.8 .8 2.400 .8 3.200 0 c2.200 .4 4.400 1.400 4.800 3.400 l.2 7.600 h-12.800z" fill="#f4e6e3"/>
<rect x="4.600" y="11.400" width="4.800" height="5.800" rx=".6" fill="#a9bbea" opacity=".9"/>
<path d="M1.800 19.600 c.2 -3 1 -5.400 2.400 -6.600 l1 1.200 c-.8 1.600 -1.200 3.600 -1.200 5.400z" fill="#e8ae8a"/>
<path d="M13 12.400 c1.400 .6 2 2.400 2 4.400 v2.800 h-2 v-3.200z" fill="#e6ab88"/>
<path d="M1.800 18.200 h8 v1.400 h-8z" fill="#e7b190"/></pattern><filter id="fb"><feGaussianBlur stdDeviation=".35"/></filter></defs><rect width="398" height="20.0" fill="url(#fr)" filter="url(#fb)"/><rect y="19.6" width="398" height="9.599999999999998" fill="#5a3aa0"/></svg>
<div class="a " style="left:75.7px;top:338.3px;width:398.6px;height:29.8px;border:1px solid #f2f2f4;border-radius:3px;"></div>
<div class="a " style="left:79px;top:342px;width:101px;height:7px;background:rgba(52,50,52,.74);border-radius:1.500px;"></div>
<svg class="a" style="left:82.2px;top:342.8px;" width="5.5" height="5.5" viewBox="0 0 5.5 5.5"><circle cx="2.750" cy="2.750" r="2.100" fill="none" stroke="#e8e8ec" stroke-width=".6"/><path d="M2.750 1.600 v1.300 l.9 .6" fill="none" stroke="#e8e8ec" stroke-width=".6"/></svg>
<svg class="a" style="left:89.6px;top:347.86px" width="1" height="1"><text x="0" y="0" transform="scale(0.935,1)" font-size="6.31" fill="#ececf0" stroke="#ececf0" stroke-width="0.12" text-anchor="start"  textLength="93.69" lengthAdjust="spacingAndGlyphs">0:03 pexels-engin-akyurt-1642228</text></svg>
<svg class="a" style="left:76px;top:370px;border-radius:2.500px 0 0 2.500px;overflow:hidden;background:#5a3aa0" width="770" height="35.7" viewBox="0 0 770 35.7"><defs><pattern id="bt" width="43.6" height="24.4" patternUnits="userSpaceOnUse"><g transform="scale(1.00726,1)"><g transform="scale(0.18021)"><rect width="240.2" height="135.4" fill="#fcefe5"/><circle cx="28.8" cy="46.2" r="78.7" fill="#fbd9c9"/><circle cx="-7" cy="38.600" r="23.700" fill="#fef2ed"/><circle cx="185.600" cy="13" r="25.400" fill="#fddab2"/><circle cx="223" cy="101" r="31" fill="#fff5f0"/><circle cx="68" cy="84.5" r="30" fill="none" stroke="#f6b19c" stroke-width="20" opacity=".38"/></g></g></pattern><filter id="fb2"><feGaussianBlur stdDeviation=".6"/></filter></defs><rect width="770" height="24.799999999999997" fill="url(#bt)" filter="url(#fb2)"/><rect y="24.4" width="770" height="11.300000000000004" fill="#5a3aa0"/></svg>
<div class="a " style="left:78px;top:372.4px;width:46px;height:8.2px;background:rgba(78,70,66,.86);border-radius:1.800px;"></div>
<svg class="a" style="left:81.7px;top:373.7px;" width="5.6" height="5.6" viewBox="0 0 5.6 5.6"><rect x=".2" y=".2" width="5.200" height="5.200" rx="1.200" fill="#fff"/><path d="M2.100 1.600 v2.400 l2 -1.200z" fill="#4e4642"/></svg>
<svg class="a" style="left:90px;top:378.86px" width="1" height="1"><text x="0" y="0" transform="scale(0.935,1)" font-size="6.31" fill="#ececf0" stroke="#ececf0" stroke-width="0.12" text-anchor="start" >0:06 Bubble</text></svg>
<svg class="a" style="left:76px;top:408.2px;border-radius:2.500px;overflow:hidden;background:#5a3aa0" width="402" height="18.8" viewBox="0 0 402 18.8"><path d="M0 18.8 L0.0 18.80 L0.8 18.80 L1.6 18.80 L2.4 18.80 L3.2 18.80 L4.0 18.80 L4.8 18.80 L5.6 18.80 L6.4 18.80 L7.2 18.80 L8.0 18.80 L8.8 18.80 L9.6 18.80 L10.4 18.80 L11.2 18.80 L12.0 18.80 L12.8 18.80 L13.6 18.80 L14.4 18.80 L15.2 18.80 L16.0 18.80 L16.8 18.80 L17.6 18.80 L18.4 18.80 L19.2 18.80 L20.0 18.80 L20.8 18.80 L21.6 18.80 L22.4 18.80 L23.2 18.80 L24.0 18.80 L24.8 18.80 L25.6 18.80 L26.4 18.80 L27.2 18.80 L28.0 18.80 L28.8 18.80 L29.6 18.80 L30.4 18.80 L31.2 18.80 L32.0 18.80 L32.8 18.80 L33.6 18.80 L34.4 18.80 L35.2 18.80 L36.0 18.80 L36.8 18.80 L37.6 18.80 L38.4 18.80 L39.2 18.80 L40.0 18.80 L40.8 18.80 L41.6 18.80 L42.4 18.80 L43.2 18.80 L44.0 18.80 L44.8 18.80 L45.6 18.80 L46.4 18.80 L47.2 18.80 L48.0 18.80 L48.8 18.60 L49.6 18.40 L50.4 18.30 L51.2 18.30 L52.0 18.30 L52.8 18.30 L53.6 18.30 L54.4 18.30 L55.2 18.30 L56.0 18.30 L56.8 18.30 L57.6 18.30 L58.4 18.30 L59.2 18.35 L60.0 18.55 L60.8 18.75 L61.6 18.80 L62.4 18.80 L63.2 18.80 L64.0 18.80 L64.8 18.80 L65.6 18.80 L66.4 18.80 L67.2 18.80 L68.0 18.80 L68.8 18.80 L69.6 18.80 L70.4 18.80 L71.2 18.80 L72.0 18.80 L72.8 18.80 L73.6 18.65 L74.4 18.45 L75.2 18.30 L76.0 18.29 L76.8 18.29 L77.6 18.28 L78.4 18.28 L79.2 18.27 L80.0 18.26 L80.8 18.26 L81.6 18.25 L82.4 18.25 L83.2 18.24 L84.0 18.24 L84.8 18.23 L85.6 18.22 L86.4 18.22 L87.2 18.21 L88.0 18.21 L88.8 18.20 L89.6 18.08 L90.4 17.92 L91.2 17.78 L92.0 17.57 L92.8 17.23 L93.6 17.34 L94.4 17.17 L95.2 16.98 L96.0 17.14 L96.8 16.75 L97.6 16.51 L98.4 16.21 L99.2 16.74 L100.0 16.40 L100.8 16.61 L101.6 15.83 L102.4 15.92 L103.2 16.60 L104.0 15.56 L104.8 15.55 L105.6 15.87 L106.4 15.89 L107.2 16.38 L108.0 16.52 L108.8 15.92 L109.6 16.43 L110.4 16.26 L111.2 16.18 L112.0 16.41 L112.8 15.88 L113.6 15.88 L114.4 15.28 L115.2 15.49 L116.0 15.12 L116.8 15.13 L117.6 14.68 L118.4 14.81 L119.2 14.95 L120.0 13.62 L120.8 13.51 L121.6 13.67 L122.4 13.81 L123.2 14.44 L124.0 14.52 L124.8 14.32 L125.6 14.67 L126.4 13.17 L127.2 13.82 L128.0 12.79 L128.8 13.67 L129.6 12.03 L130.4 11.80 L131.2 13.54 L132.0 12.61 L132.8 11.27 L133.6 12.94 L134.4 12.36 L135.2 14.06 L136.0 14.89 L136.8 14.07 L137.6 14.05 L138.4 15.12 L139.2 15.61 L140.0 15.44 L140.8 14.72 L141.6 15.18 L142.4 16.16 L143.2 16.14 L144.0 16.45 L144.8 16.62 L145.6 16.03 L146.4 16.78 L147.2 16.59 L148.0 16.84 L148.8 17.16 L149.6 16.91 L150.4 17.44 L151.2 17.25 L152.0 17.67 L152.8 17.64 L153.6 17.86 L154.4 17.58 L155.2 16.38 L156.0 15.73 L156.8 15.64 L157.6 14.61 L158.4 15.55 L159.2 15.23 L160.0 14.49 L160.8 14.77 L161.6 15.55 L162.4 14.13 L163.2 15.30 L164.0 15.19 L164.8 14.33 L165.6 15.01 L166.4 15.04 L167.2 15.38 L168.0 15.32 L168.8 14.47 L169.6 15.01 L170.4 14.37 L171.2 14.73 L172.0 14.56 L172.8 13.65 L173.6 14.44 L174.4 13.40 L175.2 10.87 L176.0 11.29 L176.8 11.25 L177.6 8.42 L178.4 9.33 L179.2 12.32 L180.0 13.54 L180.8 12.28 L181.6 11.87 L182.4 13.67 L183.2 11.97 L184.0 12.19 L184.8 12.88 L185.6 13.35 L186.4 14.11 L187.2 14.31 L188.0 12.34 L188.8 13.97 L189.6 13.03 L190.4 14.04 L191.2 12.92 L192.0 13.45 L192.8 14.13 L193.6 14.42 L194.4 13.39 L195.2 14.72 L196.0 14.45 L196.8 13.85 L197.6 13.34 L198.4 13.85 L199.2 14.52 L200.0 13.39 L200.8 14.75 L201.6 15.13 L202.4 14.72 L203.2 14.45 L204.0 15.17 L204.8 14.97 L205.6 14.63 L206.4 14.27 L207.2 15.05 L208.0 14.64 L208.8 13.71 L209.6 13.55 L210.4 14.12 L211.2 13.83 L212.0 13.15 L212.8 13.39 L213.6 12.96 L214.4 12.60 L215.2 9.67 L216.0 10.16 L216.8 13.11 L217.6 15.76 L218.4 15.17 L219.2 15.70 L220.0 15.74 L220.8 16.50 L221.6 16.18 L222.4 17.23 L223.2 17.16 L224.0 17.35 L224.8 17.60 L225.6 18.06 L226.4 18.20 L227.2 18.21 L228.0 18.22 L228.8 18.22 L229.6 18.23 L230.4 18.24 L231.2 18.24 L232.0 18.25 L232.8 18.26 L233.6 18.26 L234.4 18.27 L235.2 18.28 L236.0 18.28 L236.8 18.29 L237.6 18.30 L238.4 16.94 L239.2 14.37 L240.0 13.29 L240.8 13.17 L241.6 14.36 L242.4 13.85 L243.2 13.57 L244.0 13.75 L244.8 14.58 L245.6 13.98 L246.4 13.90 L247.2 14.44 L248.0 14.39 L248.8 14.84 L249.6 14.54 L250.4 14.54 L251.2 15.44 L252.0 14.58 L252.8 13.51 L253.6 13.23 L254.4 13.07 L255.2 13.39 L256.0 12.15 L256.8 12.09 L257.6 12.30 L258.4 11.15 L259.2 13.12 L260.0 11.21 L260.8 13.13 L261.6 12.45 L262.4 13.94 L263.2 15.24 L264.0 14.55 L264.8 14.92 L265.6 14.80 L266.4 14.39 L267.2 15.44 L268.0 15.85 L268.8 15.47 L269.6 14.99 L270.4 15.71 L271.2 15.80 L272.0 14.85 L272.8 15.22 L273.6 15.56 L274.4 15.01 L275.2 15.78 L276.0 15.39 L276.8 16.02 L277.6 15.77 L278.4 15.34 L279.2 15.26 L280.0 15.34 L280.8 15.43 L281.6 14.60 L282.4 14.54 L283.2 14.51 L284.0 13.72 L284.8 12.95 L285.6 12.85 L286.4 13.06 L287.2 12.48 L288.0 13.86 L288.8 14.03 L289.6 13.34 L290.4 13.60 L291.2 13.54 L292.0 12.85 L292.8 12.09 L293.6 12.21 L294.4 12.47 L295.2 10.96 L296.0 11.05 L296.8 12.82 L297.6 14.07 L298.4 14.49 L299.2 13.17 L300.0 15.13 L300.8 14.36 L301.6 14.89 L302.4 15.54 L303.2 15.15 L304.0 16.38 L304.8 16.46 L305.6 16.38 L306.4 17.02 L307.2 16.58 L308.0 17.19 L308.8 17.40 L309.6 17.59 L310.4 17.41 L311.2 17.66 L312.0 17.75 L312.8 17.62 L313.6 17.44 L314.4 17.24 L315.2 17.28 L316.0 17.49 L316.8 17.26 L317.6 17.39 L318.4 17.44 L319.2 17.06 L320.0 16.81 L320.8 17.15 L321.6 17.01 L322.4 16.66 L323.2 15.74 L324.0 15.37 L324.8 15.19 L325.6 14.95 L326.4 15.41 L327.2 14.79 L328.0 14.57 L328.8 15.72 L329.6 14.42 L330.4 14.68 L331.2 15.54 L332.0 14.99 L332.8 14.67 L333.6 14.17 L334.4 14.93 L335.2 14.48 L336.0 13.81 L336.8 13.80 L337.6 13.38 L338.4 14.14 L339.2 13.64 L340.0 14.39 L340.8 11.61 L341.6 10.04 L342.4 12.50 L343.2 13.82 L344.0 14.81 L344.8 13.65 L345.6 13.60 L346.4 13.69 L347.2 14.52 L348.0 14.17 L348.8 15.02 L349.6 14.14 L350.4 14.31 L351.2 15.18 L352.0 15.65 L352.8 15.18 L353.6 15.09 L354.4 14.82 L355.2 15.24 L356.0 15.90 L356.8 14.80 L357.6 15.87 L358.4 14.84 L359.2 15.74 L360.0 15.52 L360.8 14.90 L361.6 15.82 L362.4 15.82 L363.2 15.32 L364.0 15.05 L364.8 14.90 L365.6 15.12 L366.4 14.78 L367.2 15.50 L368.0 15.34 L368.8 16.66 L369.6 16.86 L370.4 16.77 L371.2 16.94 L372.0 16.55 L372.8 16.60 L373.6 16.68 L374.4 16.38 L375.2 16.60 L376.0 16.79 L376.8 16.71 L377.6 13.66 L378.4 9.97 L379.2 12.56 L380.0 11.96 L380.8 12.15 L381.6 13.55 L382.4 13.86 L383.2 14.93 L384.0 14.74 L384.8 15.01 L385.6 15.08 L386.4 16.07 L387.2 15.06 L388.0 15.85 L388.8 16.19 L389.6 15.99 L390.4 16.45 L391.2 16.74 L392.0 16.82 L392.8 17.46 L393.6 17.39 L394.4 17.67 L395.2 17.82 L396.0 17.90 L396.8 17.98 L397.6 18.06 L398.4 18.14 L399.2 18.22 L400.0 18.30 L400.8 18.34 L401.6 18.38 L402 18.8z" fill="#b7a4e0"/></svg>
<svg class="a" style="left:78px;top:409.6px;" width="6" height="6" viewBox="0 0 6 6"><path d="M3.400 4.600 v-3.800 c.9 0 1.600 .5 1.600 1.400" fill="none" stroke="#ececf0" stroke-width=".65" stroke-linecap="round" stroke-linejoin="round"/><ellipse cx="2.600" cy="4.700" rx=".9" ry=".7" fill="none" stroke="#ececf0" stroke-width=".65" stroke-linecap="round" stroke-linejoin="round"/><path d="M1.200 .8 v1.200 M.6 1.400 h1.200" fill="none" stroke="#ececf0" stroke-width=".65" stroke-linecap="round" stroke-linejoin="round"/></svg>
<svg class="a" style="left:86px;top:414.96px" width="1" height="1"><text x="0" y="0" transform="scale(0.935,1)" font-size="6.31" fill="#ececf0" stroke="#ececf0" stroke-width="0.12" text-anchor="start" >0:03 (Animation) HitPaw - Create Unlimited Possibilities!</text></svg>
<div class="a " style="left:155.35px;top:305px;width:0.7px;height:151px;background:#d8d8dc;"></div>
<svg class="a" style="left:152.7px;top:300.8px;" width="6" height="7" viewBox="0 0 6 7"><path d="M.4 .4 h5.200 v4 l-2.600 2.200 l-2.600 -2.200z" fill="#fff"/></svg>
<div class="a " style="left:151px;top:313.2px;width:9.4px;height:14.7px;background:#fff;border-radius:4.700px;"></div>
<svg class="a" style="left:151.4px;top:313.4px;" width="8.6" height="14.6" viewBox="0 0 8.6 14.6"><path d="M4.300 1.600 v3.600 M3.200 4.200 l1.100 1.200 l1.100 -1.200" fill="none" stroke="#444" stroke-width=".6"/><circle cx="3" cy="11.400" r="1" fill="none" stroke="#333" stroke-width=".6"/><circle cx="5.600" cy="11.400" r="1" fill="none" stroke="#333" stroke-width=".6"/><path d="M3.600 10.600 l2.200 -3.600 M5 10.600 l-2.200 -3.600" stroke="#333" stroke-width=".6" fill="none"/></svg>
<div class="a " style="left:76px;top:454.6px;width:486px;height:1.4px;background:#2a2a32;border-radius:1px;"></div>
</div></body></html>
